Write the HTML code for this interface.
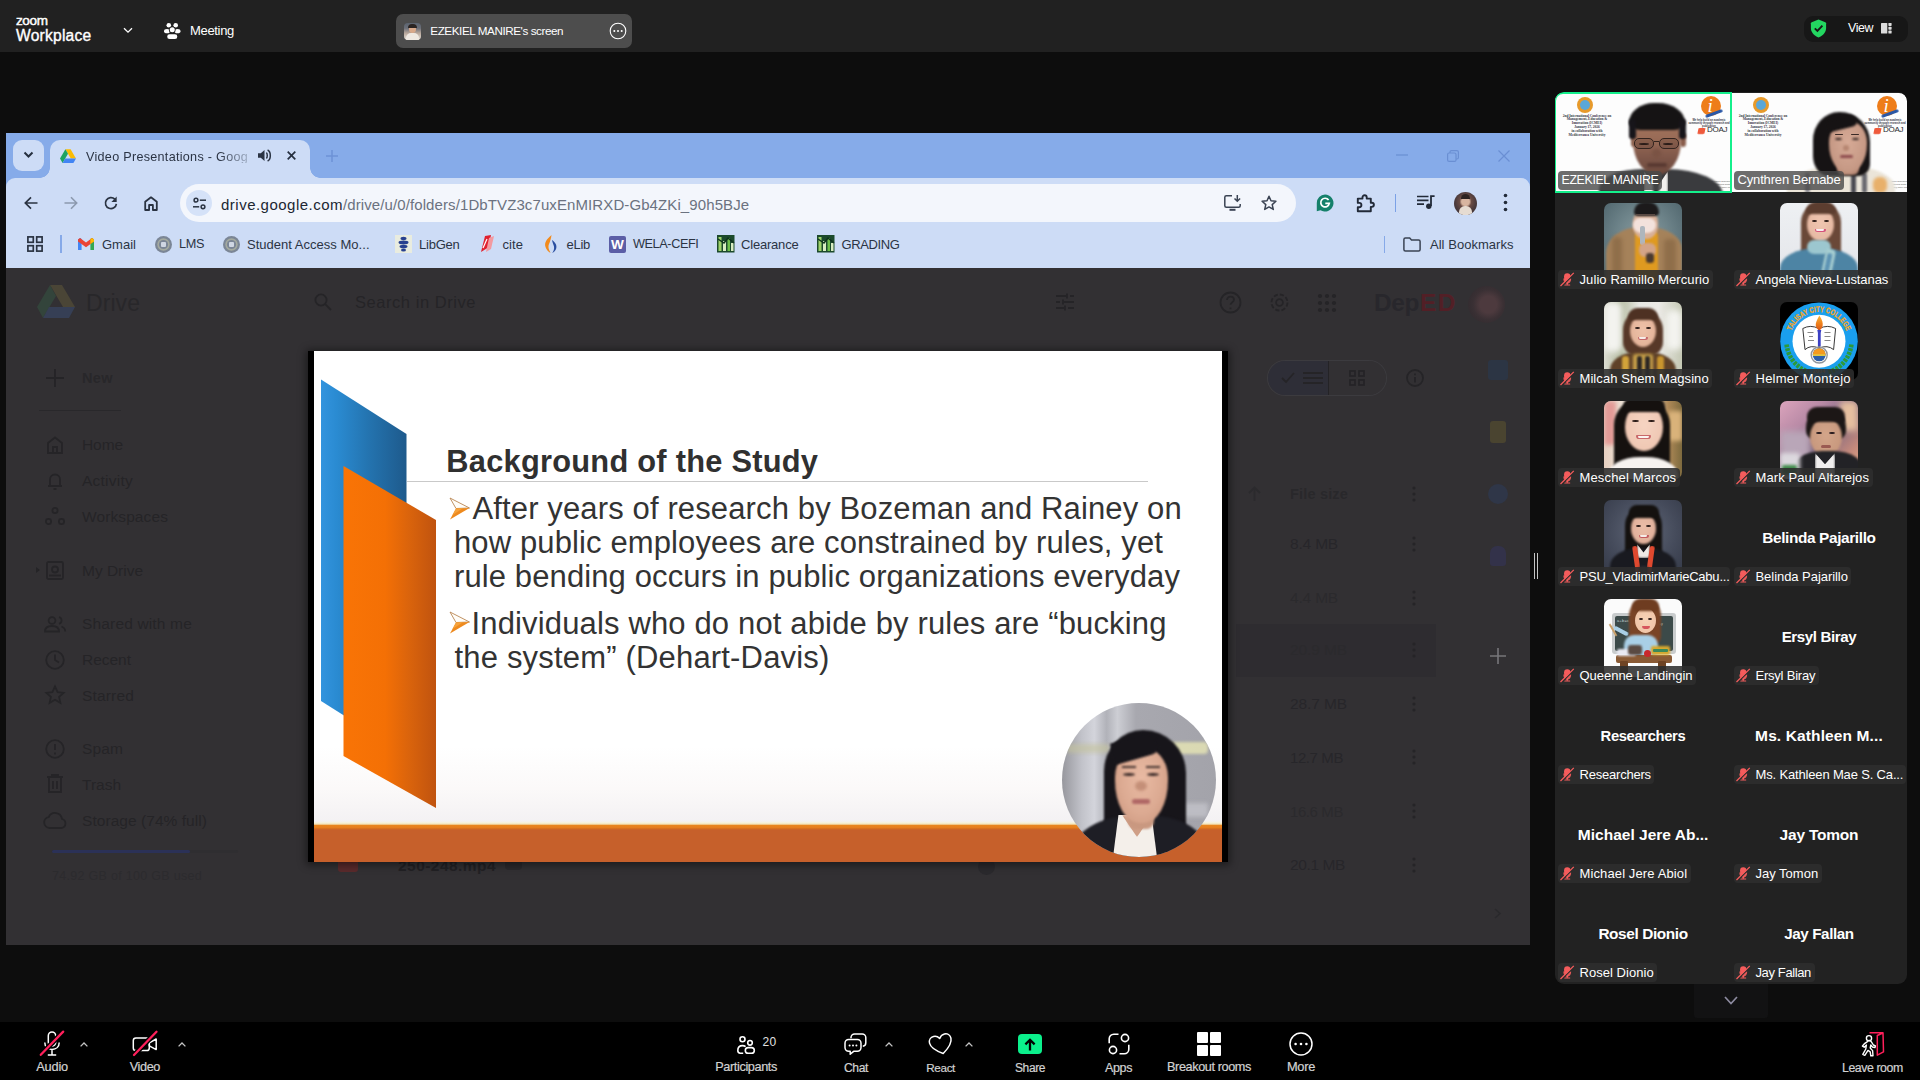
<!DOCTYPE html>
<html lang="en">
<head>
<meta charset="utf-8">
<title>Zoom Workplace - Meeting</title>
<style>
*{box-sizing:border-box;margin:0;padding:0}
html,body{width:1920px;height:1080px;overflow:hidden;background:#0d0d0d}
body{position:relative;font-family:"Liberation Sans","DejaVu Sans",sans-serif;color:#fff}
.a{position:absolute}
.t{position:absolute;white-space:nowrap;line-height:1;color:#fff}
svg{display:block;overflow:visible}
#topbar{position:absolute;left:0;top:0;width:1920px;height:52px;background:#212121}
#pill{position:absolute;left:396px;top:14px;width:236px;height:34px;border-radius:7px;background:#4d4d4d}
#viewpill{position:absolute;left:1804px;top:16px;width:104px;height:26px;border-radius:9px;background:#171717}
#botbar{position:absolute;left:0;top:1022px;width:1920px;height:58px;background:#000}
#share{position:absolute;left:6px;top:133px;width:1524px;height:812px;background:#323033;overflow:hidden}
#chrome{position:absolute;left:0;top:0;width:1524px;height:135px;background:#86abe9}
#cbar{position:absolute;left:0;top:45px;width:1524px;height:90px;background:#cddcf6;border-radius:9px 9px 0 0}
#omni{position:absolute;left:174px;top:51px;width:1116px;height:38px;border-radius:19px;background:#f3f6fc}
#drive{position:absolute;left:0;top:135px;width:1524px;height:677px;background:#323033;overflow:hidden}
#slidewrap{position:absolute;left:302px;top:218px;width:920px;height:511px;background:#000;box-shadow:0 1px 8px 2px rgba(0,0,0,.45)}
#slide{position:absolute;left:6px;top:0;width:908px;height:511px;background:#fff;overflow:hidden}
#panel{position:absolute;left:1555px;top:92px;width:352px;height:892px;background:#222;border-radius:9px;overflow:hidden}
.tile{position:absolute;width:176px;height:99px;overflow:hidden}
.av{position:absolute;left:49px;top:11px;width:78px;height:78px;border-radius:7px;overflow:hidden}
.nm{position:absolute;left:3px;top:78px;height:19px;border-radius:4px;background:rgba(46,46,46,.88);white-space:nowrap;overflow:hidden}
</style>
</head>
<body>
<div id="topbar">
<div class="t" style="left:16.0px;top:13.6px;font-size:13.5px;letter-spacing:-0.38px;-webkit-text-stroke:.45px #fff;">zoom</div>
<div class="t" style="left:16.0px;top:28.1px;font-size:15.6px;letter-spacing:0.23px;-webkit-text-stroke:.35px #fff;">Workplace</div>
<svg class="a" style="left:123px;top:27px;" width="10" height="7" viewBox="0 0 10 7"><path d="M1 1.2 L5 5.2 L9 1.2" fill="none" stroke="#fff" stroke-width="1.3"/></svg>
<svg class="a" style="left:164px;top:23px;" width="17" height="17" viewBox="0 0 17 17"><g fill="#fff"><circle cx="4.800" cy="2.300" r="2.300"/><circle cx="11.700" cy="2.300" r="2.300"/><ellipse cx="3" cy="8.200" rx="3" ry="2.100"/><ellipse cx="13.500" cy="8.200" rx="3" ry="2.100"/><circle cx="8.250" cy="6.800" r="3.400" fill="#212121"/><circle cx="8.250" cy="6.800" r="2.500"/><rect x="3.200" y="11.300" width="10.100" height="4.700" rx="2.350"/></g></svg>
<div class="t" style="left:190.0px;top:24.3px;font-size:13px;letter-spacing:-0.32px;">Meeting</div>
<div id="pill">
<div class="a" style="left:8px;top:9px;width:17px;height:17px;border-radius:4px;overflow:hidden;background:linear-gradient(180deg,#5b6470 0%,#6a6e78 30%,#b9a89c 60%,#e9e4de 100%)"><div class="a" style="left:5px;top:2px;width:7px;height:8px;border-radius:50%;background:#d9a98a"></div><div class="a" style="left:4px;top:1px;width:9px;height:4px;border-radius:4px 4px 0 0;background:#2a2422"></div><div class="a" style="left:2px;top:10px;width:13px;height:8px;border-radius:5px 5px 0 0;background:#efe9e2"></div></div>
<div class="t" style="left:34.3px;top:11.1px;font-size:11.7px;letter-spacing:-0.43px;">EZEKIEL MANIRE's screen</div>
<svg class="a" style="left:213px;top:8px;" width="18" height="18" viewBox="0 0 18 18"><circle cx="9" cy="9" r="7.800" fill="none" stroke="#fff" stroke-width="1.1"/><circle cx="5.300" cy="9" r="1" fill="#fff"/><circle cx="9" cy="9" r="1" fill="#fff"/><circle cx="12.700" cy="9" r="1" fill="#fff"/></svg>
</div>
<div id="viewpill">
<svg class="a" style="left:6px;top:3px;" width="17" height="19" viewBox="0 0 17 19"><path d="M8.5.6 15.300 3.200c.5.200.8.600.8 1.100v4.600c0 4-2.800 7.400-7.600 9.500C3.700 16.300.9 12.900.9 8.900V4.300c0-.5.3-.9.8-1.100z" fill="#23d660"/><path d="M4.800 9.400l2.600 2.500 5-5.200" fill="none" stroke="#171717" stroke-width="1.900"/></svg>
<div class="t" style="left:44.0px;top:5.5px;font-size:12.4px;letter-spacing:-0.41px;">View</div>
<svg class="a" style="left:77px;top:7px;" width="11" height="11" viewBox="0 0 11 11"><g fill="#dcdcdc"><rect x="0" y="0" width="6.300" height="10.500" rx=".6"/><rect x="7.400" y="0" width="3.200" height="2.900" rx=".6"/><rect x="7.400" y="3.800" width="3.200" height="2.900" rx=".6"/><rect x="7.400" y="7.600" width="3.200" height="2.900" rx=".6"/></g></svg>
</div></div>
<div id="share">
<div id="chrome">
<div class="a" style="left:7px;top:7px;width:31px;height:31px;background:#cddcf6;border-radius:9px;"></div>
<svg class="a" style="left:17px;top:18px;" width="11" height="8" viewBox="0 0 11 8"><path d="M1.500 1.500 5.500 5.500 9.500 1.500" fill="none" stroke="#263040" stroke-width="2"/></svg>
<div class="a" style="left:44px;top:7px;width:260px;height:40px;background:#cddcf6;border-radius:10px 10px 0 0;"></div>
<div class="a" style="left:34px;top:35px;width:10px;height:10px;background:radial-gradient(circle at 0 0,rgba(0,0,0,0) 9.5px,#cddcf6 10px)"></div>
<div class="a" style="left:304px;top:35px;width:10px;height:10px;background:radial-gradient(circle at 100% 0,rgba(0,0,0,0) 9.5px,#cddcf6 10px)"></div>
<svg class="a" style="left:54px;top:15.5px;" width="16" height="14.3" viewBox="0 0 16 13.900"><path d="M5.400 0h5.200l5.400 9.300h-5.200z" fill="#fbbc04"/><path d="M5.400 0 0 9.300l2.600 4.600 5.400-9.300z" fill="#1ea362"/><path d="M2.600 13.900 5.200 9.300H16l-2.600 4.600z" fill="#4285f4"/><path d="M10.800 9.300H16l-2.600 4.600z" fill="#ea4335" opacity=".0"/></svg>
<div class="t" style="left:80.0px;top:17.9px;font-size:12.6px;letter-spacing:0.29px;color:#2b3444;-webkit-mask-image:linear-gradient(90deg,#000 82%,rgba(0,0,0,.25) 100%);">Video Presentations - Goog</div>
<svg class="a" style="left:252px;top:16px;" width="14" height="13" viewBox="0 0 14 13"><path d="M0 4.300h2.800L6.500 1v11L2.800 8.700H0z" fill="#2b3444"/><path d="M8.300 3.600c1.300.700 1.300 5.100 0 5.800M9.600 1c3.600 1.500 3.600 9.500 0 11" fill="none" stroke="#2b3444" stroke-width="1.500"/></svg>
<svg class="a" style="left:281px;top:18px;" width="9" height="9" viewBox="0 0 9 9"><path d="M.7.700l7.600 7.600M8.300.700.700 8.300" stroke="#263040" stroke-width="1.700" fill="none"/></svg>
<svg class="a" style="left:320px;top:17px;" width="12" height="12" viewBox="0 0 12 12"><path d="M6 0v12M0 6h12" stroke="#6d92d6" stroke-width="1.500" fill="none"/></svg>
<svg class="a" style="left:1390px;top:21px;" width="12" height="2" viewBox="0 0 12 2"><path d="M0 1h12" stroke="#6a8fd3" stroke-width="1.200"/></svg>
<svg class="a" style="left:1441px;top:16.5px;" width="12" height="12" viewBox="0 0 12 12"><rect x=".6" y="3" width="8.400" height="8.400" rx="1.500" fill="none" stroke="#6a8fd3" stroke-width="1.200"/><path d="M3 3V2.100c0-.8.700-1.500 1.500-1.500h5.400c.8 0 1.500.7 1.500 1.500v5.400c0 .8-.7 1.500-1.500 1.500H9" fill="none" stroke="#6a8fd3" stroke-width="1.200"/></svg>
<svg class="a" style="left:1492px;top:16.5px;" width="12" height="12" viewBox="0 0 12 12"><path d="M.5.500l11 11M11.500.500l-11 11" stroke="#6a8fd3" stroke-width="1.200" fill="none"/></svg>
<div id="cbar"></div>
<div id="omni"></div>
<svg class="a" style="left:18px;top:63px;" width="14" height="14" viewBox="0 0 14 14"><path d="M13.500 7H1.800M7 1.300 1.300 7 7 12.700" fill="none" stroke="#2a3342" stroke-width="1.700"/></svg>
<svg class="a" style="left:58px;top:63px;" width="14" height="14" viewBox="0 0 14 14"><path d="M.5 7h11.700M7 1.300 12.700 7 7 12.700" fill="none" stroke="#8c99ae" stroke-width="1.600"/></svg>
<svg class="a" style="left:98px;top:63px;" width="14" height="14" viewBox="0 0 14 14"><path d="M12.400 7.800A5.500 5.500 0 1 1 10.800 3.200" fill="none" stroke="#2a3342" stroke-width="1.700"/><path d="M12.700 .6v5.300H7.400z" fill="#2a3342"/></svg>
<svg class="a" style="left:138px;top:62.5px;" width="14" height="15" viewBox="0 0 14 15"><path d="M1.200 14V5.700L7 1.300l5.800 4.400V14H8.900V9H5.100v5z" fill="none" stroke="#2a3342" stroke-width="1.800" stroke-linejoin="round"/></svg>
<div class="a" style="left:180px;top:57px;width:26px;height:26px;background:#d5e2f8;border-radius:13px;"></div>
<svg class="a" style="left:186.5px;top:63.5px;" width="13" height="13" viewBox="0 0 13 13"><g fill="none" stroke="#2a3342" stroke-width="1.500"><circle cx="3" cy="3.200" r="1.900"/><path d="M6.800 3.200H13"/><circle cx="10" cy="9.800" r="1.900"/><path d="M0 9.800h6.200"/></g></svg>
<div class="t" style="left:215.0px;top:63.5px;font-size:15px;letter-spacing:0.49px;color:#202632;">drive.google.com</div>
<div class="t" style="left:337.0px;top:63.5px;font-size:15px;letter-spacing:0.10px;color:#6b7280;">/drive/u/0/folders/1DbTVZ3c7uxEnMIRXD-Gb4ZKi_90h5BJe</div>
<svg class="a" style="left:1218px;top:62px;" width="19" height="16" viewBox="0 0 19 16"><g fill="none" stroke="#3a4353" stroke-width="1.500"><path d="M8 .800H2.300C1.500.800.800 1.500.800 2.300v8.400c0 .8.700 1.500 1.500 1.500h12.400c.8 0 1.500-.7 1.500-1.500V9"/><path d="M5.500 14.800h6" stroke-width="2"/><path d="M13.300 0v6M10.500 3.500l2.800 2.800 2.800-2.800"/></g></svg>
<svg class="a" style="left:1255px;top:62px;" width="16" height="16" viewBox="0 0 16 16"><path d="M8 1.300l2 4.500 4.900.5-3.700 3.300 1.100 4.800L8 11.900l-4.300 2.500 1.100-4.800L1.100 6.300 6 5.800z" fill="none" stroke="#3a4353" stroke-width="1.500" stroke-linejoin="round"/></svg>
<svg class="a" style="left:1310px;top:61px;" width="18" height="18" viewBox="0 0 18 18"><path d="M9 .5A8.500 8.500 0 1 1 4.500 16.200L.8 17.300V9A8.500 8.500 0 0 1 9 .5z" fill="#15806a"/><path d="M12.600 6.100A4.300 4.300 0 1 0 13.300 9.400H9.300" fill="none" stroke="#fff" stroke-width="1.700"/></svg>
<svg class="a" style="left:1350px;top:60px;" width="19" height="19" viewBox="0 0 19 19"><path d="M1.800 5.600h4.700V4.300a2.100 2.100 0 0 1 4.200 0v1.300h4.100v4.100h1a2.100 2.100 0 0 1 0 4.200h-1v4.300H1.800v-3.900h1.400a2.200 2.200 0 0 0 0-4.400H1.800z" fill="none" stroke="#222a38" stroke-width="1.900" stroke-linejoin="round"/></svg>
<div class="a" style="left:1388.5px;top:61px;width:1.5px;height:18px;background:#7ba1e6;"></div>
<svg class="a" style="left:1411px;top:62px;" width="18" height="15" viewBox="0 0 18 15"><g fill="none" stroke="#222a38" stroke-width="1.700"><path d="M0 1.500h11.500M0 5.300h11.500M0 9.100h7"/><path d="M14 11V1.200h3.600" stroke-width="1.800"/></g><circle cx="11.800" cy="11.300" r="2.700" fill="#222a38"/></svg>
<div class="a" style="left:1448px;top:58.500px;width:23px;height:23px;border-radius:50%;overflow:hidden;background:radial-gradient(circle at 50% 42%,#d8b5a0 0 22%,#6a4c44 34%,#4a3a3c 60%,#3b3236 100%)"><div class="a" style="left:5px;top:14px;width:13px;height:10px;border-radius:6px 6px 0 0;background:#e6dcd2"></div><div class="a" style="left:7px;top:2px;width:9px;height:5px;border-radius:5px 5px 0 0;background:#2c2220"></div></div>
<svg class="a" style="left:1497px;top:60px;" width="5" height="19" viewBox="0 0 5 19"><circle cx="2.500" cy="2.500" r="1.800" fill="#222a38"/><circle cx="2.500" cy="9.500" r="1.800" fill="#222a38"/><circle cx="2.500" cy="16.500" r="1.800" fill="#222a38"/></svg>
<svg class="a" style="left:21px;top:103px;" width="16" height="16" viewBox="0 0 16 16"><g fill="none" stroke="#2a3342" stroke-width="1.700"><rect x=".9" y=".9" width="5.400" height="5.400"/><rect x="9.700" y=".9" width="5.400" height="5.400"/><rect x=".9" y="9.700" width="5.400" height="5.400"/><rect x="9.700" y="9.700" width="5.400" height="5.400"/></g></svg>
<div class="a" style="left:54px;top:102px;width:1.5px;height:18px;background:#86a9e8;"></div>
<svg class="a" style="left:72px;top:105px;" width="16" height="12" viewBox="0 0 16 12"><path d="M0 12V1.500L2.200 0 3.600 1.100V12z" fill="#4285f4"/><path d="M16 12V1.500L13.800 0l-1.400 1.100V12z" fill="#34a853"/><path d="M0 1.500 2 0l6 4.500L14 0l2 1.500v2L8 9.300 0 3.500z" fill="#ea4335"/><path d="M12.400 1.100 14 0l2 1.500v2l-3.600 2.600z" fill="#fbbc04"/></svg>
<div class="t" style="left:96.0px;top:104.5px;font-size:13px;letter-spacing:0.01px;color:#2b3444;">Gmail</div>
<svg class="a" style="left:148.5px;top:102.5px;" width="17" height="17" viewBox="0 0 17 17"><circle cx="8.500" cy="8.500" r="8.500" fill="#7b8696"/><circle cx="8.500" cy="8.500" r="6.200" fill="#a4aa9f"/><circle cx="8.500" cy="8.500" r="4.600" fill="#7b8696"/><rect x="6" y="6" width="5" height="5" rx="1" fill="#cfd6e2"/></svg>
<div class="t" style="left:173.0px;top:104.7px;font-size:12.7px;letter-spacing:-0.37px;color:#2b3444;">LMS</div>
<svg class="a" style="left:216.5px;top:102.5px;" width="17" height="17" viewBox="0 0 17 17"><circle cx="8.500" cy="8.500" r="8.500" fill="#7b8696"/><circle cx="8.500" cy="8.500" r="6.200" fill="#a4aa9f"/><circle cx="8.500" cy="8.500" r="4.600" fill="#7b8696"/><rect x="6" y="6" width="5" height="5" rx="1" fill="#cfd6e2"/></svg>
<div class="t" style="left:241.0px;top:104.5px;font-size:13px;letter-spacing:0.02px;color:#2b3444;">Student Access Mo...</div>
<div class="a" style="left:388.5px;top:102px;width:17.5px;height:18px;background:#e9ecdf;"></div>
<svg class="a" style="left:392px;top:103px;" width="11" height="16" viewBox="0 0 11 16"><g fill="#27408f"><ellipse cx="5.500" cy="2.500" rx="3" ry="1.700"/><ellipse cx="5.500" cy="6.500" rx="5" ry="1.900"/><ellipse cx="5.500" cy="10.500" rx="4" ry="1.800"/><ellipse cx="5.500" cy="14" rx="2.500" ry="1.500"/></g></svg>
<div class="t" style="left:413.0px;top:104.5px;font-size:13px;letter-spacing:-0.24px;color:#2b3444;">LibGen</div>
<svg class="a" style="left:473px;top:102px;" width="17" height="18" viewBox="0 0 17 18"><path d="M6 1 12 0l-2 12-8 5z" fill="#e0212f"/><path d="M10 3l5-2-3 13-5 3z" fill="#f39aa0"/><path d="M4 13l4-9" stroke="#fff" stroke-width="1.200"/></svg>
<div class="t" style="left:496.5px;top:104.5px;font-size:13px;letter-spacing:0.07px;color:#2b3444;">cite</div>
<svg class="a" style="left:538px;top:102px;" width="13" height="18" viewBox="0 0 13 18"><path d="M7.500 0C3 4 0 7.500 1.500 12c1 3 3 5 5 6-.5-2-2.500-4-2-7 .4-2.600 2-4 3-11z" fill="#f28b1d"/><path d="M8 5c3 2 5.200 5 4.200 8.500-.6 2-2.200 3.500-4 4.500 1.500-2 2.200-4 1.800-6.500C9.700 9.700 8.500 8 8 5z" fill="#2b4fa0"/></svg>
<div class="t" style="left:560.5px;top:104.5px;font-size:13px;letter-spacing:-0.27px;color:#2b3444;">eLib</div>
<div class="a" style="left:602.5px;top:102.5px;width:17.5px;height:17px;background:#5b5ea6;border-radius:2px;"></div>
<div class="t" style="left:605.0px;top:104.5px;font-size:13.6px;letter-spacing:-0.34px;font-weight:bold;">W</div>
<div class="t" style="left:627.0px;top:104.7px;font-size:12.7px;letter-spacing:-0.41px;color:#2b3444;">WELA-CEFI</div>
<svg class="a" style="left:710.5px;top:102px;" width="17.5" height="17.5" viewBox="0 0 17.5 17.5"><rect width="17.500" height="17.500" fill="#1c4a2c"/><rect x="1.500" y="2" width="3" height="14" fill="#9fd36a"/><rect x="6" y="6" width="3" height="10" fill="#d8ecc0"/><rect x="10.500" y="3" width="2.500" height="13" fill="#6fbf4a"/><rect x="14" y="8" width="2.500" height="8" fill="#d8ecc0"/><path d="M1 4l6 4 4-5 6 5" stroke="#10331c" stroke-width="1.500" fill="none"/></svg>
<div class="t" style="left:735.0px;top:104.5px;font-size:13px;letter-spacing:-0.20px;color:#2b3444;">Clearance</div>
<svg class="a" style="left:810.5px;top:102px;" width="17.5" height="17.5" viewBox="0 0 17.5 17.5"><rect width="17.500" height="17.500" fill="#1c4a2c"/><rect x="1.500" y="2" width="3" height="14" fill="#9fd36a"/><rect x="6" y="6" width="3" height="10" fill="#d8ecc0"/><rect x="10.500" y="3" width="2.500" height="13" fill="#6fbf4a"/><rect x="14" y="8" width="2.500" height="8" fill="#d8ecc0"/><path d="M1 4l6 4 4-5 6 5" stroke="#10331c" stroke-width="1.500" fill="none"/></svg>
<div class="t" style="left:835.5px;top:104.5px;font-size:13px;letter-spacing:-0.38px;color:#2b3444;">GRADING</div>
<div class="a" style="left:1377.5px;top:103px;width:1.5px;height:17px;background:#86a9e8;"></div>
<svg class="a" style="left:1397px;top:103.5px;" width="18" height="15" viewBox="0 0 18 15"><path d="M.9 2.400c0-.8.700-1.500 1.500-1.500h4.300l1.800 2h7.100c.8 0 1.500.7 1.500 1.500v8.200c0 .8-.7 1.500-1.500 1.500H2.400c-.8 0-1.500-.7-1.500-1.500z" fill="none" stroke="#3a4353" stroke-width="1.500"/></svg>
<div class="t" style="left:1424.0px;top:104.5px;font-size:13px;letter-spacing:0.03px;color:#2b3444;">All Bookmarks</div>
</div>
<div id="drive">
<svg class="a" style="left:31px;top:17px;" width="38" height="34" viewBox="0 0 38 34"><path d="M13 0h12l13 22H26z" fill="#4a4536"/><path d="M13 0 0 22l6 11 13-22z" fill="#33443b"/><path d="M6 33l6-11h26l-6 11z" fill="#363f55"/></svg>
<div class="t" style="left:80.0px;top:23.5px;font-size:23px;letter-spacing:0.07px;color:#28272a;">Drive</div>
<svg class="a" style="left:308px;top:25px;" width="18" height="18" viewBox="0 0 18 18"><circle cx="7" cy="7" r="5.600" fill="none" stroke="#252427" stroke-width="1.800"/><path d="M11.200 11.200 17 17" fill="none" stroke="#252427" stroke-width="1.800"/></svg>
<div class="t" style="left:349.0px;top:26.0px;font-size:16.5px;letter-spacing:0.55px;color:#252427;">Search in Drive</div>
<svg class="a" style="left:1050px;top:25px;" width="18" height="18" viewBox="0 0 18 18"><path d="M0 3h11M14 3h4M0 9h4M7 9h11M0 15h9M12 15h6M11 .500v5M7 6.500v5M9 12.500v5" fill="none" stroke="#252427" stroke-width="1.800"/></svg>
<svg class="a" style="left:1213px;top:23px;" width="23" height="23" viewBox="0 0 23 23"><circle cx="11.500" cy="11.500" r="10" fill="none" stroke="#252427" stroke-width="1.800"/><path d="M8 9c0-2 1.500-3.400 3.500-3.400S15 7 15 8.800c0 2.200-3.500 2.600-3.500 5M11.500 16.500v1.800" fill="none" stroke="#252427" stroke-width="1.800"/></svg>
<svg class="a" style="left:1262px;top:23px;" width="23" height="23" viewBox="0 0 23 23"><circle cx="11.500" cy="11.500" r="8" fill="none" stroke="#252427" stroke-width="1.800" stroke-width="3" stroke-dasharray="4.200 2.100"/><circle cx="11.500" cy="11.500" r="3.400" fill="none" stroke="#252427" stroke-width="1.800"/></svg>
<svg class="a" style="left:1311px;top:25px;" width="20" height="20" viewBox="0 0 20 20"><circle cx="3" cy="3" r="2.100" fill="#252427"/><circle cx="3" cy="10" r="2.100" fill="#252427"/><circle cx="3" cy="17" r="2.100" fill="#252427"/><circle cx="10" cy="3" r="2.100" fill="#252427"/><circle cx="10" cy="10" r="2.100" fill="#252427"/><circle cx="10" cy="17" r="2.100" fill="#252427"/><circle cx="17" cy="3" r="2.100" fill="#252427"/><circle cx="17" cy="10" r="2.100" fill="#252427"/><circle cx="17" cy="17" r="2.100" fill="#252427"/></svg>
<div class="t" style="left:1368.0px;top:23.3px;font-size:24.4px;letter-spacing:-0.37px;color:#28272c;font-weight:bold;">Dep</div>
<div class="t" style="left:1414.0px;top:23.3px;font-size:24.5px;letter-spacing:1.48px;color:#521f26;font-weight:bold;">ED</div>
<div class="a" style="left:1462px;top:18px;width:37px;height:37px;background:radial-gradient(circle at 55% 50%,#4d3a3e 0 30%,#3a3034 55%,#2b282c 100%);border-radius:50%;"></div>
<svg class="a" style="left:40px;top:101px;" width="18" height="18" viewBox="0 0 18 18"><path d="M9 0v18M0 9h18" fill="none" stroke="#252427" stroke-width="1.800"/></svg>
<div class="t" style="left:76.0px;top:102.7px;font-size:14.5px;letter-spacing:0.40px;color:#28272a;font-weight:bold;">New</div>
<div class="a" style="left:33px;top:142px;width:82px;height:1px;background:#29282b;"></div>
<div class="t" style="left:76.0px;top:169.4px;font-size:15.5px;letter-spacing:-0.09px;color:#252427;">Home</div>
<div class="t" style="left:76.0px;top:205.4px;font-size:15.5px;letter-spacing:0.24px;color:#252427;">Activity</div>
<div class="t" style="left:76.0px;top:241.4px;font-size:15.5px;letter-spacing:0.10px;color:#252427;">Workspaces</div>
<div class="t" style="left:76.0px;top:294.9px;font-size:15.5px;letter-spacing:-0.02px;color:#252427;">My Drive</div>
<div class="t" style="left:76.0px;top:348.4px;font-size:15.5px;letter-spacing:0.16px;color:#252427;">Shared with me</div>
<div class="t" style="left:76.0px;top:383.9px;font-size:15.5px;letter-spacing:-0.02px;color:#252427;">Recent</div>
<div class="t" style="left:76.0px;top:419.9px;font-size:15.5px;letter-spacing:0.17px;color:#252427;">Starred</div>
<div class="t" style="left:76.0px;top:472.9px;font-size:15.5px;letter-spacing:0.13px;color:#252427;">Spam</div>
<div class="t" style="left:76.0px;top:508.9px;font-size:15.5px;letter-spacing:-0.01px;color:#252427;">Trash</div>
<div class="t" style="left:76.0px;top:544.9px;font-size:15.5px;letter-spacing:0.05px;color:#252427;">Storage (74% full)</div>
<svg class="a" style="left:40px;top:168px;" width="18" height="18" viewBox="0 0 18 18"><path d="M2 17V7l7-5.500L16 7v10H2zM7 17v-6h4v6" fill="none" stroke="#252427" stroke-width="1.800"/></svg>
<svg class="a" style="left:41px;top:203px;" width="16" height="19" viewBox="0 0 16 19"><path d="M1 15h14M3 15V8.500a5 5 0 0 1 10 0V15M6.500 18h3" fill="none" stroke="#252427" stroke-width="1.800"/></svg>
<svg class="a" style="left:39px;top:239px;" width="20" height="19" viewBox="0 0 20 19"><circle cx="10" cy="3.500" r="2.600" fill="none" stroke="#252427" stroke-width="1.800"/><circle cx="3.500" cy="14.500" r="2.600" fill="none" stroke="#252427" stroke-width="1.800"/><circle cx="16.500" cy="14.500" r="2.600" fill="none" stroke="#252427" stroke-width="1.800"/></svg>
<svg class="a" style="left:30px;top:299px;" width="4" height="6" viewBox="0 0 4 6"><path d="M0 0l4 3-4 3z" fill="#252427"/></svg>
<svg class="a" style="left:40px;top:293px;" width="18" height="19" viewBox="0 0 18 19"><rect x="1" y="1" width="16" height="17" rx="1.500" fill="none" stroke="#252427" stroke-width="1.800"/><circle cx="9" cy="8.500" r="3" fill="none" stroke="#252427" stroke-width="1.800"/><path d="M3 14.500h12" fill="none" stroke="#252427" stroke-width="1.800"/></svg>
<svg class="a" style="left:38px;top:348px;" width="22" height="16" viewBox="0 0 22 16"><circle cx="8" cy="4.500" r="3.400" fill="none" stroke="#252427" stroke-width="1.800"/><path d="M1 15.500c0-4 3-5.500 7-5.500s7 1.500 7 5.500zM15 1.200a3.400 3.400 0 0 1 0 6.600M17.500 10.500c2.500.800 3.700 2.300 3.700 5" fill="none" stroke="#252427" stroke-width="1.800"/></svg>
<svg class="a" style="left:39px;top:382px;" width="20" height="20" viewBox="0 0 20 20"><circle cx="10" cy="10" r="8.800" fill="none" stroke="#252427" stroke-width="1.800"/><path d="M10 4.500V10l4 2.500" fill="none" stroke="#252427" stroke-width="1.800"/></svg>
<svg class="a" style="left:39px;top:417px;" width="20" height="20" viewBox="0 0 20 20"><path d="M10 1.500l2.600 5.600 6 .700-4.500 4.100 1.300 6L10 14.800l-5.400 3.100 1.300-6L1.400 7.800l6-.700z" fill="none" stroke="#252427" stroke-width="1.800"/></svg>
<svg class="a" style="left:39px;top:471px;" width="20" height="20" viewBox="0 0 20 20"><circle cx="10" cy="10" r="8.800" fill="none" stroke="#252427" stroke-width="1.800"/><path d="M10 5v6M10 13.500v2" fill="none" stroke="#252427" stroke-width="1.800"/></svg>
<svg class="a" style="left:41px;top:506px;" width="16" height="20" viewBox="0 0 16 20"><path d="M0 3h16M5 3V1h6v2M2 3v15h12V3M6 7v8M10 7v8" fill="none" stroke="#252427" stroke-width="1.800"/></svg>
<svg class="a" style="left:37px;top:544px;" width="24" height="17" viewBox="0 0 24 17"><path d="M6.500 16a5.500 5.500 0 0 1-.800-10.900A7 7 0 0 1 19 7a4.600 4.600 0 0 1-.500 9z" fill="none" stroke="#252427" stroke-width="1.800"/></svg>
<div class="a" style="left:46px;top:582px;width:186px;height:3px;background:#2f2e31;border-radius:2px;"></div>
<div class="a" style="left:46px;top:582px;width:138px;height:3px;background:#2b3157;border-radius:2px;"></div>
<div class="t" style="left:46.0px;top:602.4px;font-size:12.5px;letter-spacing:0.30px;color:#2c2b2e;">74.92 GB of 100 GB used</div>
<div class="a" style="left:1262px;top:93px;width:118px;height:34px;background:linear-gradient(90deg,#2e2e37 0 60px,#323033 60px);border-radius:17px;box-shadow:0 0 0 1px #3c3b3f;"></div>
<div class="a" style="left:1322px;top:93px;width:1px;height:34px;background:#242326;"></div>
<svg class="a" style="left:1275px;top:102px;" width="44" height="16" viewBox="0 0 44 16"><path d="M1 8l4 4 8-9M22 3h20M22 8h20M22 13h20" fill="none" stroke="#252427" stroke-width="1.800"/></svg>
<svg class="a" style="left:1343px;top:102px;" width="16" height="16" viewBox="0 0 16 16"><rect x="1" y="1" width="5" height="5" fill="none" stroke="#252427" stroke-width="1.800"/><rect x="10" y="1" width="5" height="5" fill="none" stroke="#252427" stroke-width="1.800"/><rect x="1" y="10" width="5" height="5" fill="none" stroke="#252427" stroke-width="1.800"/><rect x="10" y="10" width="5" height="5" fill="none" stroke="#252427" stroke-width="1.800"/></svg>
<svg class="a" style="left:1400px;top:101px;" width="18" height="18" viewBox="0 0 18 18"><circle cx="9" cy="9" r="8" fill="none" stroke="#252427" stroke-width="1.800"/><path d="M9 8v5.500M9 4.500v1.800" fill="none" stroke="#252427" stroke-width="1.800"/></svg>
<svg class="a" style="left:1242px;top:218px;" width="13" height="15" viewBox="0 0 13 15"><path d="M6.500 15V1.500M1 7l5.500-5.500L12 7" fill="none" stroke="#2b2a2d" stroke-width="1.800"/></svg>
<div class="t" style="left:1284.0px;top:219.2px;font-size:14.5px;letter-spacing:0.18px;color:#29282b;font-weight:bold;">File size</div>
<div class="a" style="left:1230px;top:356px;width:200px;height:53px;background:#2e2c30;"></div>
<svg class="a" style="left:1406px;top:218px;" width="4" height="16" viewBox="0 0 4 16"><circle cx="2" cy="2" r="1.600" fill="#252427"/><circle cx="2" cy="8" r="1.600" fill="#252427"/><circle cx="2" cy="14" r="1.600" fill="#252427"/></svg>
<div class="t" style="left:1284.0px;top:268.4px;font-size:15.5px;letter-spacing:-0.18px;color:#27262a;">8.4 MB</div>
<svg class="a" style="left:1406px;top:268px;" width="4" height="16" viewBox="0 0 4 16"><circle cx="2" cy="2" r="1.600" fill="#252427"/><circle cx="2" cy="8" r="1.600" fill="#252427"/><circle cx="2" cy="14" r="1.600" fill="#252427"/></svg>
<div class="t" style="left:1284.0px;top:322.4px;font-size:15.5px;letter-spacing:-0.18px;color:#2b2a2d;">4.4 MB</div>
<svg class="a" style="left:1406px;top:322px;" width="4" height="16" viewBox="0 0 4 16"><circle cx="2" cy="2" r="1.600" fill="#252427"/><circle cx="2" cy="8" r="1.600" fill="#252427"/><circle cx="2" cy="14" r="1.600" fill="#252427"/></svg>
<div class="t" style="left:1284.0px;top:374.4px;font-size:15.5px;letter-spacing:-0.10px;color:#2b2a2d;">20.9 MB</div>
<svg class="a" style="left:1406px;top:374px;" width="4" height="16" viewBox="0 0 4 16"><circle cx="2" cy="2" r="1.600" fill="#252427"/><circle cx="2" cy="8" r="1.600" fill="#252427"/><circle cx="2" cy="14" r="1.600" fill="#252427"/></svg>
<div class="t" style="left:1284.0px;top:428.4px;font-size:15.5px;letter-spacing:-0.10px;color:#27262a;">28.7 MB</div>
<svg class="a" style="left:1406px;top:428px;" width="4" height="16" viewBox="0 0 4 16"><circle cx="2" cy="2" r="1.600" fill="#252427"/><circle cx="2" cy="8" r="1.600" fill="#252427"/><circle cx="2" cy="14" r="1.600" fill="#252427"/></svg>
<div class="t" style="left:1284.0px;top:481.8px;font-size:15.0px;letter-spacing:-0.41px;color:#27262a;">12.7 MB</div>
<svg class="a" style="left:1406px;top:481px;" width="4" height="16" viewBox="0 0 4 16"><circle cx="2" cy="2" r="1.600" fill="#252427"/><circle cx="2" cy="8" r="1.600" fill="#252427"/><circle cx="2" cy="14" r="1.600" fill="#252427"/></svg>
<div class="t" style="left:1284.0px;top:535.8px;font-size:15.0px;letter-spacing:-0.41px;color:#2b2a2d;">16.6 MB</div>
<svg class="a" style="left:1406px;top:535px;" width="4" height="16" viewBox="0 0 4 16"><circle cx="2" cy="2" r="1.600" fill="#252427"/><circle cx="2" cy="8" r="1.600" fill="#252427"/><circle cx="2" cy="14" r="1.600" fill="#252427"/></svg>
<div class="t" style="left:1284.0px;top:589.4px;font-size:15.5px;letter-spacing:-0.39px;color:#27262a;">20.1 MB</div>
<svg class="a" style="left:1406px;top:589px;" width="4" height="16" viewBox="0 0 4 16"><circle cx="2" cy="2" r="1.600" fill="#252427"/><circle cx="2" cy="8" r="1.600" fill="#252427"/><circle cx="2" cy="14" r="1.600" fill="#252427"/></svg>
<div class="a" style="left:1482px;top:92px;width:20px;height:20px;background:#2c3544;border-radius:3px;"></div>
<div class="a" style="left:1484px;top:153px;width:16px;height:22px;background:#4a4430;border-radius:3px;"></div>
<div class="a" style="left:1482px;top:216px;width:20px;height:20px;background:#2f3648;border-radius:50%;"></div>
<div class="a" style="left:1484px;top:278px;width:16px;height:20px;background:#33324a;border-radius:7px 7px 3px 3px;"></div>
<svg class="a" style="left:1484px;top:380px;" width="16" height="16" viewBox="0 0 16 16"><path d="M8 0v16M0 8h16" fill="none" stroke="#77767a" stroke-width="1.600"/></svg>
<svg class="a" style="left:1488px;top:640px;" width="7" height="11" viewBox="0 0 7 11"><path d="M1 1l5 4.500L1 10" fill="none" stroke="#2a292c" stroke-width="1.600"/></svg>
<div class="a" style="left:332px;top:590px;width:20px;height:14px;background:#5a2a2c;border-radius:3px;"></div>
<div class="t" style="left:392.0px;top:589.9px;font-size:15.5px;letter-spacing:0.45px;color:#222124;font-weight:bold;">250-248.mp4</div>
<div class="a" style="left:972px;top:590px;width:17px;height:17px;background:#2a292d;border-radius:50%;"></div>
<div class="a" style="left:499px;top:592px;width:17px;height:10px;background:#2a292c;border-radius:4px;"></div>
</div>
<div id="slidewrap"><div id="slide">
<div class="a" style="left:0px;top:395px;width:908px;height:78px;background:linear-gradient(180deg,#fff 0%,#fbf9f9 55%,#f3f1f3 100%);"></div>
<div class="a" style="left:0px;top:473px;width:908px;height:38px;background:#c6602b;"></div>
<div class="a" style="left:0px;top:469.5px;width:908px;height:9px;background:linear-gradient(180deg,rgba(246,243,228,0) 0,#f6f2dc 18%,#f3e2b6 36%,#e8861f 46%,#e67e1e 72%,#d56d1f 86%,#c6602b 100%);"></div>
<svg class="a" style="left:0;top:0" width="908" height="511" viewBox="0 0 908 511"><defs><linearGradient id="gb" x1="0" x2="1" y1="0" y2="0"><stop offset="0" stop-color="#3394de"/><stop offset=".18" stop-color="#2a8bd2"/><stop offset=".55" stop-color="#2474b0"/><stop offset="1" stop-color="#1e5a8c"/></linearGradient><linearGradient id="go" x1="0" x2="1" y1="0" y2="0"><stop offset="0" stop-color="#f97406"/><stop offset=".45" stop-color="#f47005"/><stop offset=".72" stop-color="#d9630c"/><stop offset="1" stop-color="#c0530f"/></linearGradient></defs><path d="M7 28.500 92.500 83V404L7 350z" fill="url(#gb)"/><path d="M29.500 115 122 169V457L29.500 405z" fill="url(#go)"/></svg>
<div class="t" style="left:132.3px;top:95.5px;font-size:30.8px;letter-spacing:0.25px;color:#303030;font-weight:bold;">Background of the Study</div>
<div class="a" style="left:93px;top:129.5px;width:741px;height:1.5px;background:#c9c9c9;"></div>
<svg class="a" style="left:135.7px;top:146.8px;" width="20" height="22" viewBox="0 0 20 22"><path d="M0 0 19.500 10 6 10.500z" fill="#fffdf8" stroke="#b98652" stroke-width=".9" stroke-linejoin="round"/><path d="M6 10.500 19.500 10 0 21.500z" fill="#ee8a1e"/><path d="M6 10.500 13 10.300 2.500 17z" fill="#f6a23a"/></svg>
<svg class="a" style="left:136px;top:261px;" width="20" height="22" viewBox="0 0 20 22"><path d="M0 0 19.500 10 6 10.500z" fill="#fffdf8" stroke="#b98652" stroke-width=".9" stroke-linejoin="round"/><path d="M6 10.500 19.500 10 0 21.500z" fill="#ee8a1e"/><path d="M6 10.500 13 10.300 2.500 17z" fill="#f6a23a"/></svg>
<div class="t" style="left:158.5px;top:142.2px;font-size:31px;letter-spacing:0.13px;color:#333;">After years of research by Bozeman and Rainey on</div>
<div class="t" style="left:140.0px;top:176.0px;font-size:31px;letter-spacing:0.12px;color:#333;">how public employees are constrained by rules, yet</div>
<div class="t" style="left:140.0px;top:209.8px;font-size:31px;letter-spacing:0.11px;color:#333;">rule bending occurs in public organizations everyday</div>
<div class="t" style="left:157.5px;top:256.8px;font-size:31px;letter-spacing:0.15px;color:#333;">Individuals who do not abide by rules are “bucking</div>
<div class="t" style="left:140.5px;top:291.0px;font-size:31px;letter-spacing:0.18px;color:#333;">the system” (Dehart-Davis)</div>
<div class="a" style="left:748px;top:352px;width:154px;height:154px;border-radius:50%;overflow:hidden;background:linear-gradient(90deg,#97979d 0%,#c2c3ca 13%,#d3d4db 21%,#b1b2b9 29%,#cdced4 36%,#a8a8af 48%,#a3a3aa 100%)"><div class="a" style="left:4px;top:41px;width:44px;height:9px;background:#c4c29a;opacity:.6;border-radius:4px;filter:blur(2px)"></div><div class="a" style="left:106px;top:39px;width:40px;height:12px;background:#e4e3b4;opacity:.85;border-radius:4px;filter:blur(1.500px)"></div><div class="a" style="left:96px;top:100px;width:50px;height:14px;background:#c8c8cf;opacity:.7;filter:blur(2px)"></div><div class="a" style="left:42px;top:27px;width:82px;height:120px;border-radius:42px 46px 26px 30px / 44px 46px 30px 30px;background:#17151a;filter:blur(1.200px)"></div><div class="a" style="left:10px;top:112px;width:134px;height:60px;border-radius:64px 60px 0 0 / 38px 34px 0 0;background:#1e1e25;filter:blur(1px)"></div><div class="a" style="left:50px;top:112px;width:46px;height:50px;background:#f4efea;clip-path:polygon(14% 0,86% 0,100% 100%,0 100%);filter:blur(.6px)"></div><div class="a" style="left:60px;top:112px;width:30px;height:22px;background:#cf9f87;clip-path:polygon(0 0,100% 0,50% 100%);filter:blur(.8px)"></div><div class="a" style="left:66px;top:100px;width:26px;height:26px;background:#c99880;border-radius:8px;filter:blur(1.200px)"></div><div class="a" style="left:53px;top:44px;width:53px;height:76px;border-radius:26px 26px 24px 24px / 30px 30px 42px 42px;background:radial-gradient(ellipse at 50% 42%,#e9baa3 0,#dcaa92 55%,#c8937a 100%);filter:blur(.8px)"></div><div class="a" style="left:50px;top:34px;width:46px;height:22px;border-radius:0 22px 14px 0;background:#17151a;transform:rotate(-16deg);filter:blur(1.200px)"></div><div class="a" style="left:61px;top:70px;width:12px;height:3px;border-radius:50%;background:#3a2a28;filter:blur(.8px)"></div><div class="a" style="left:85px;top:70px;width:12px;height:3px;border-radius:50%;background:#3a2a28;filter:blur(.8px)"></div><div class="a" style="left:60px;top:63px;width:14px;height:2px;background:#4a3834;filter:blur(.8px)"></div><div class="a" style="left:84px;top:63px;width:14px;height:2px;background:#4a3834;filter:blur(.8px)"></div><div class="a" style="left:73px;top:78px;width:12px;height:10px;border-radius:50%;background:#c48f78;filter:blur(1.500px)"></div><div class="a" style="left:70px;top:96px;width:18px;height:5px;border-radius:3px;background:#a4565a;opacity:.8;filter:blur(1px)"></div></div>
</div></div>
</div>
<div id="panel">
<div class="tile" style="left:0;top:1px;border-radius:8px 0 0 0"><div class="a" style="left:0px;top:0px;width:176px;height:99px;background:#fdfdfd;border-radius:0;"></div><div class="a" style="left:22px;top:4px;width:16px;height:16px;background:#e79a2b;border-radius:50%;filter:blur(0.5px);"></div><div class="a" style="left:25px;top:7px;width:10px;height:10px;background:#5aa7d8;border-radius:50%;filter:blur(0.4px);"></div><div class="t" style="left:0;width:64px;text-align:center;top:21.6px;font-size:3.600px;font-weight:bold;font-family:'Liberation Serif',serif;color:#3a3a4a;letter-spacing:-.05px">2nd International Conference on</div><div class="t" style="left:0;width:64px;text-align:center;top:25.4px;font-size:3.600px;font-weight:bold;font-family:'Liberation Serif',serif;color:#3a3a4a;letter-spacing:-.05px">Management, Education &amp;</div><div class="t" style="left:0;width:64px;text-align:center;top:29.2px;font-size:3.600px;font-weight:bold;font-family:'Liberation Serif',serif;color:#3a3a4a;letter-spacing:-.05px">Innovation (ICMEI)</div><div class="t" style="left:0;width:64px;text-align:center;top:33.4px;font-size:3.600px;font-weight:bold;font-family:'Liberation Serif',serif;color:#3a3a4a;letter-spacing:-.05px">January 17, 2026</div><div class="t" style="left:0;width:64px;text-align:center;top:37.0px;font-size:3.600px;font-weight:bold;font-family:'Liberation Serif',serif;color:#3a3a4a;letter-spacing:-.05px">in collaboration with</div><div class="t" style="left:0;width:64px;text-align:center;top:40.9px;font-size:3.600px;font-weight:bold;font-family:'Liberation Serif',serif;color:#3a3a4a;letter-spacing:-.05px">Mediterranea University</div><div class="a" style="left:146px;top:3px;width:20px;height:20px;background:#ee7d1a;border-radius:50%;filter:blur(0.5px);"></div><div class="t" style="left:152.500px;top:3px;font-size:19px;font-style:italic;font-family:'Liberation Serif',serif;color:#fff">i</div><div class="a" style="left:150px;top:19px;width:18px;height:3px;background:#2a57a6;border-radius:2px;filter:blur(0.5px);transform:rotate(-20deg);"></div><div class="t" style="left:132px;width:44px;text-align:center;top:26px;font-size:2.600px;line-height:3.200px;font-weight:bold;color:#3a3a4a;white-space:normal">We help build an academic community through research and publication</div><div class="a" style="left:143px;top:34.5px;width:7px;height:5.5px;background:#ef5a3c;border-radius:1px;filter:blur(0.3px);transform:skewX(-12deg);"></div><div class="t" style="left:152px;top:33.200px;font-size:8px;letter-spacing:-.3px;color:#2a2a2e">DOAJ</div><div class="t" style="left:139px;width:37px;text-align:right;top:87px;font-size:2.300px;line-height:3px;color:#555;white-space:normal">Mediterranea Research Incorporated Camarines Norte, Philippines Email: official@icmei.org</div><div class="a" style="left:44px;top:76px;width:124px;height:30px;background:#3a3b3e;border-radius:44px 56px 0 0 / 20px 26px 0 0;filter:blur(1.2px);"></div><div class="a" style="left:89px;top:78px;width:24px;height:24px;background:#f2f0ee;border-radius:3px;filter:blur(0.8px);clip-path:polygon(0 0,50% 75%,100% 0,100% 100%,0 100%);"></div><div class="a" style="left:98px;top:86px;width:6px;height:14px;background:#2c2c30;border-radius:2px;filter:blur(0.8px);"></div><div class="a" style="left:76px;top:40px;width:6px;height:14px;background:#8a5e4c;border-radius:3px;filter:blur(1px);"></div><div class="a" style="left:125px;top:40px;width:6px;height:14px;background:#8a5e4c;border-radius:3px;filter:blur(1px);"></div><div class="a" style="left:78px;top:20px;width:48px;height:62px;background:linear-gradient(180deg,#a5765f 0%,#9a6c57 40%,#80584a 70%,#6b483c 100%);border-radius:22px 22px 24px 24px / 22px 22px 34px 34px;filter:blur(1px);"></div><div class="a" style="left:74px;top:10px;width:56px;height:27px;background:#151314;border-radius:26px 28px 12px 12px / 20px 20px 8px 8px;filter:blur(1.1px);"></div><div class="a" style="left:74px;top:26px;width:7px;height:20px;background:#17151a;border-radius:3px;filter:blur(1.2px);"></div><div class="a" style="left:124px;top:26px;width:7px;height:20px;background:#17151a;border-radius:3px;filter:blur(1.2px);"></div><div class="a" style="left:79px;top:45px;width:20px;height:11px;background:rgba(60,40,34,.18);border-radius:5px;border:1px solid #33241f;"></div><div class="a" style="left:104px;top:45px;width:20px;height:11px;background:rgba(60,40,34,.18);border-radius:5px;border:1px solid #33241f;"></div><div class="a" style="left:99px;top:48px;width:5px;height:1.2px;background:#33241f;border-radius:0;"></div><div class="a" style="left:84px;top:50px;width:10px;height:2px;background:#2a1c18;border-radius:50%;filter:blur(0.7px);"></div><div class="a" style="left:108px;top:50px;width:10px;height:2px;background:#2a1c18;border-radius:50%;filter:blur(0.7px);"></div><div class="a" style="left:97px;top:56px;width:9px;height:9px;background:#7a5344;border-radius:50%;filter:blur(1.5px);"></div><div class="a" style="left:92px;top:70px;width:20px;height:4px;background:#5a3a32;border-radius:3px;filter:blur(1.2px);"></div><div class="nm" style="left:3px;top:77.500px;width:104px;background:rgba(72,72,72,.8)"><div class="t" style="left:3.5px;top:3.1px;font-size:12.4px;letter-spacing:-0.37px;">EZEKIEL MANIRE</div></div></div>
<div class="tile" style="left:176px;top:1px;border-radius:0 8px 0 0"><div class="a" style="left:0px;top:0px;width:176px;height:99px;background:#fdfdfd;border-radius:0;"></div><div class="a" style="left:22px;top:4px;width:16px;height:16px;background:#e79a2b;border-radius:50%;filter:blur(0.5px);"></div><div class="a" style="left:25px;top:7px;width:10px;height:10px;background:#5aa7d8;border-radius:50%;filter:blur(0.4px);"></div><div class="t" style="left:0;width:64px;text-align:center;top:21.6px;font-size:3.600px;font-weight:bold;font-family:'Liberation Serif',serif;color:#3a3a4a;letter-spacing:-.05px">2nd International Conference on</div><div class="t" style="left:0;width:64px;text-align:center;top:25.4px;font-size:3.600px;font-weight:bold;font-family:'Liberation Serif',serif;color:#3a3a4a;letter-spacing:-.05px">Management, Education &amp;</div><div class="t" style="left:0;width:64px;text-align:center;top:29.2px;font-size:3.600px;font-weight:bold;font-family:'Liberation Serif',serif;color:#3a3a4a;letter-spacing:-.05px">Innovation (ICMEI)</div><div class="t" style="left:0;width:64px;text-align:center;top:33.4px;font-size:3.600px;font-weight:bold;font-family:'Liberation Serif',serif;color:#3a3a4a;letter-spacing:-.05px">January 17, 2026</div><div class="t" style="left:0;width:64px;text-align:center;top:37.0px;font-size:3.600px;font-weight:bold;font-family:'Liberation Serif',serif;color:#3a3a4a;letter-spacing:-.05px">in collaboration with</div><div class="t" style="left:0;width:64px;text-align:center;top:40.9px;font-size:3.600px;font-weight:bold;font-family:'Liberation Serif',serif;color:#3a3a4a;letter-spacing:-.05px">Mediterranea University</div><div class="a" style="left:146px;top:3px;width:20px;height:20px;background:#ee7d1a;border-radius:50%;filter:blur(0.5px);"></div><div class="t" style="left:152.500px;top:3px;font-size:19px;font-style:italic;font-family:'Liberation Serif',serif;color:#fff">i</div><div class="a" style="left:150px;top:19px;width:18px;height:3px;background:#2a57a6;border-radius:2px;filter:blur(0.5px);transform:rotate(-20deg);"></div><div class="t" style="left:132px;width:44px;text-align:center;top:26px;font-size:2.600px;line-height:3.200px;font-weight:bold;color:#3a3a4a;white-space:normal">We help build an academic community through research and publication</div><div class="a" style="left:143px;top:34.5px;width:7px;height:5.5px;background:#ef5a3c;border-radius:1px;filter:blur(0.3px);transform:skewX(-12deg);"></div><div class="t" style="left:152px;top:33.200px;font-size:8px;letter-spacing:-.3px;color:#2a2a2e">DOAJ</div><div class="t" style="left:139px;width:37px;text-align:right;top:87px;font-size:2.300px;line-height:3px;color:#555;white-space:normal">Mediterranea Research Incorporated Camarines Norte, Philippines Email: official@icmei.org</div><div class="a" style="left:56px;top:73px;width:108px;height:30px;background:#ebe5d9;border-radius:50px 46px 0 0 / 24px 22px 0 0;filter:blur(1.2px);"></div><div class="a" style="left:74px;top:80px;width:5px;height:20px;background:#8a8a90;border-radius:2px;filter:blur(1.2px);"></div><div class="a" style="left:120px;top:77px;width:5px;height:24px;background:#4a4a52;border-radius:2px;filter:blur(1px);"></div><div class="a" style="left:131px;top:80px;width:5px;height:20px;background:#6a6a70;border-radius:2px;filter:blur(1px);"></div><div class="a" style="left:142px;top:84px;width:14px;height:16px;background:#e8b06a;border-radius:6px;filter:blur(1.5px);"></div><div class="a" style="left:82px;top:19px;width:57px;height:64px;background:#161314;border-radius:26px 30px 12px 16px / 28px 30px 12px 20px;filter:blur(1.3px);"></div><div class="a" style="left:106px;top:66px;width:22px;height:16px;background:#b88a76;border-radius:6px;filter:blur(1.2px);"></div><div class="a" style="left:98px;top:28px;width:38px;height:52px;background:radial-gradient(ellipse at 50% 42%,#d6aa96 0,#c99c88 55%,#b98b77 100%);border-radius:19px 19px 20px 20px / 22px 22px 30px 30px;filter:blur(1px);"></div><div class="a" style="left:96px;top:24px;width:30px;height:12px;background:#161314;border-radius:0 14px 10px 0;filter:blur(1.2px);transform:rotate(-14deg);"></div><div class="a" style="left:104px;top:45px;width:7px;height:2.2px;background:#2c1e1c;border-radius:50%;filter:blur(0.8px);"></div><div class="a" style="left:121px;top:45px;width:7px;height:2.2px;background:#2c1e1c;border-radius:50%;filter:blur(0.8px);"></div><div class="a" style="left:104px;top:41px;width:8px;height:1.3px;background:#3a2a26;border-radius:1px;filter:blur(0.6px);"></div><div class="a" style="left:120px;top:41px;width:8px;height:1.3px;background:#3a2a26;border-radius:1px;filter:blur(0.6px);"></div><div class="a" style="left:112px;top:52px;width:6px;height:6px;background:#b78772;border-radius:50%;filter:blur(1.2px);"></div><div class="a" style="left:109px;top:62px;width:13px;height:3px;background:#8e4c4e;border-radius:3px;filter:blur(0.8px);"></div><div class="nm" style="left:3px;top:77.500px;width:110px;background:rgba(72,72,72,.8)"><div class="t" style="left:3.5px;top:2.6px;font-size:13px;letter-spacing:-0.16px;">Cynthren Bernabe</div></div></div>
<div class="a" style="left:-1px;top:0;width:178px;height:101px;border:2px solid #14ef8b;border-radius:9px 0 0 0"></div>
<div class="tile" style="left:0px;top:100px"><div class="av" style="background:radial-gradient(ellipse at 50% 45%,#8c9ea2 0%,#6f858b 45%,#4c626a 100%)"><div class="a" style="left:2px;top:24px;width:76px;height:62px;background:#a5825a;border-radius:34px 34px 6px 6px / 26px 22px 6px 6px;filter:blur(1.3px);"></div><div class="a" style="left:8px;top:34px;width:10px;height:44px;background:#8f6e4a;border-radius:4px;filter:blur(2px);"></div><div class="a" style="left:60px;top:36px;width:12px;height:40px;background:#8f6e4a;border-radius:4px;filter:blur(2px);"></div><div class="a" style="left:31px;top:28px;width:23px;height:52px;background:#df9a20;border-radius:5px;filter:blur(1px);"></div><div class="a" style="left:29px;top:6px;width:25px;height:30px;background:#d8b098;border-radius:46%;filter:blur(0.9px);"></div><div class="a" style="left:29px;top:15px;width:23px;height:15px;background:#f3e2dc;border-radius:9px 9px 11px 11px;filter:blur(0.8px);"></div><div class="a" style="left:30px;top:-1px;width:25px;height:14px;background:#1c1a1b;border-radius:12px 12px 5px 5px;filter:blur(0.9px);"></div><div class="a" style="left:32px;top:11px;width:19px;height:1.2px;background:#5a4a44;border-radius:0;filter:blur(0.4px);"></div><div class="a" style="left:36px;top:23px;width:4.5px;height:19px;background:#aeb6bd;border-radius:2px;filter:blur(0.6px);"></div><div class="a" style="left:35px;top:40px;width:17px;height:14px;background:#d3a487;border-radius:6px;filter:blur(1px);"></div><div class="a" style="left:42px;top:50px;width:8px;height:10px;background:#4a3a30;border-radius:3px;filter:blur(1.2px);"></div></div><div class="nm" style="width:154.8px"><svg class="a" style="left:0;top:0" width="19" height="19" viewBox="0 0 19 19"><g fill="#f55c5c"><rect x="6.100" y="3.200" width="6.300" height="8" rx="3.100"/><path d="M5.300 8.500h7.900c0 3-1.500 5-3.950 5.200S5.300 11.500 5.300 8.500z" opacity=".92"/><rect x="8.500" y="12.500" width="1.500" height="2.200"/><rect x="6.300" y="14.400" width="5.900" height="1.200" rx=".4"/></g><path d="M3.600 16.300 16.700 3.500" stroke="#2a2a2a" stroke-width="1.500"/><path d="M2.500 16 15.800 2.900" stroke="#f55c5c" stroke-width="1.300"/></svg><div class="t" style="left:21.5px;top:2.9px;font-size:13px;letter-spacing:0.09px;">Julio Ramillo Mercurio</div></div></div>
<div class="tile" style="left:176px;top:100px"><div class="av" style="background:linear-gradient(180deg,#eef0f3 0%,#e3e5e9 100%)"><div class="a" style="left:21px;top:0px;width:40px;height:62px;background:#6a4838;border-radius:19px 19px 10px 10px;filter:blur(1.2px);"></div><div class="a" style="left:27px;top:5px;width:27px;height:33px;background:radial-gradient(ellipse at 50% 45%,#efc6b1 0,#e2b39d 100%);border-radius:50%;filter:blur(0.8px);"></div><div class="a" style="left:26px;top:-1px;width:30px;height:12px;background:#5c3d2f;border-radius:14px 14px 4px 4px;filter:blur(1px);"></div><div class="a" style="left:32px;top:17px;width:5px;height:2px;background:#2a1a16;border-radius:50%;filter:blur(0.6px);"></div><div class="a" style="left:44px;top:17px;width:5px;height:2px;background:#2a1a16;border-radius:50%;filter:blur(0.6px);"></div><div class="a" style="left:34.5px;top:26px;width:11px;height:3.2px;background:#d5527c;border-radius:1px 1px 5px 5px;filter:blur(0.7px);"></div><div class="a" style="left:36px;top:26.3px;width:8px;height:1.5px;background:#f8eef0;border-radius:1px 1px 3px 3px;filter:blur(0.5px);"></div><div class="a" style="left:0px;top:45px;width:78px;height:40px;background:#4d84a4;border-radius:38px 38px 0 0 / 20px 20px 0 0;filter:blur(1px);"></div><div class="a" style="left:27px;top:37px;width:24px;height:14px;background:#9cc7cf;border-radius:7px;filter:blur(1px);"></div><div class="a" style="left:43px;top:46px;width:10px;height:32px;background:#a9d0d2;border-radius:4px;filter:blur(1px);transform:rotate(12deg);"></div><div class="a" style="left:45px;top:50px;width:5px;height:26px;background:#5d93b4;border-radius:2px;filter:blur(1px);transform:rotate(12deg);"></div></div><div class="nm" style="width:157.7px"><svg class="a" style="left:0;top:0" width="19" height="19" viewBox="0 0 19 19"><g fill="#f55c5c"><rect x="6.100" y="3.200" width="6.300" height="8" rx="3.100"/><path d="M5.300 8.500h7.900c0 3-1.500 5-3.950 5.200S5.300 11.500 5.300 8.500z" opacity=".92"/><rect x="8.500" y="12.500" width="1.500" height="2.200"/><rect x="6.300" y="14.400" width="5.900" height="1.200" rx=".4"/></g><path d="M3.600 16.300 16.700 3.500" stroke="#2a2a2a" stroke-width="1.500"/><path d="M2.500 16 15.800 2.900" stroke="#f55c5c" stroke-width="1.300"/></svg><div class="t" style="left:21.5px;top:2.9px;font-size:13px;letter-spacing:-0.08px;">Angela Nieva-Lustanas</div></div></div>
<div class="tile" style="left:0px;top:199px"><div class="av" style="background:linear-gradient(90deg,#dcddd2 0%,#b4bba0 22%,#e8e8e4 45%,#eceae6 70%,#c4c8b4 100%)"><div class="a" style="left:0px;top:0px;width:18px;height:50px;background:#f3f3ef;border-radius:6px;filter:blur(3px);"></div><div class="a" style="left:62px;top:8px;width:16px;height:40px;background:#f3f3ef;border-radius:6px;filter:blur(3px);"></div><div class="a" style="left:19px;top:8px;width:40px;height:46px;background:#573828;border-radius:20px 20px 14px 14px;filter:blur(1.2px);"></div><div class="a" style="left:26px;top:13px;width:26px;height:32px;background:radial-gradient(ellipse at 50% 45%,#eec1a8 0,#dfae94 100%);border-radius:50%;filter:blur(0.8px);"></div><div class="a" style="left:24px;top:6px;width:30px;height:12px;background:#4e3123;border-radius:14px 14px 4px 4px;filter:blur(1px);"></div><div class="a" style="left:31px;top:25px;width:5px;height:2px;background:#2a1a16;border-radius:50%;filter:blur(0.6px);"></div><div class="a" style="left:42px;top:25px;width:5px;height:2px;background:#2a1a16;border-radius:50%;filter:blur(0.6px);"></div><div class="a" style="left:33.5px;top:35px;width:10px;height:2.8px;background:#c4686a;border-radius:1px 1px 5px 5px;filter:blur(0.7px);"></div><div class="a" style="left:35px;top:35.3px;width:7px;height:1.3px;background:#f6ece8;border-radius:1px 1px 3px 3px;filter:blur(0.5px);"></div><div class="a" style="left:6px;top:50px;width:66px;height:36px;background:#5f4128;border-radius:28px 28px 0 0 / 18px 18px 0 0;filter:blur(1.2px);"></div><div class="a" style="left:18px;top:54px;width:7px;height:30px;background:#d2a33a;border-radius:3px;filter:blur(1px);"></div><div class="a" style="left:29px;top:52px;width:20px;height:30px;background:#caa24a;border-radius:3px;filter:blur(1.5px);"></div><div class="a" style="left:33px;top:54px;width:5px;height:28px;background:#2b2624;border-radius:2px;filter:blur(1px);"></div><div class="a" style="left:41px;top:54px;width:5px;height:28px;background:#2b2624;border-radius:2px;filter:blur(1px);"></div><div class="a" style="left:53px;top:54px;width:7px;height:30px;background:#c9952e;border-radius:3px;filter:blur(1px);"></div></div><div class="nm" style="width:154.3px"><svg class="a" style="left:0;top:0" width="19" height="19" viewBox="0 0 19 19"><g fill="#f55c5c"><rect x="6.100" y="3.200" width="6.300" height="8" rx="3.100"/><path d="M5.300 8.500h7.900c0 3-1.500 5-3.950 5.200S5.300 11.500 5.300 8.500z" opacity=".92"/><rect x="8.500" y="12.500" width="1.500" height="2.200"/><rect x="6.300" y="14.400" width="5.900" height="1.200" rx=".4"/></g><path d="M3.600 16.300 16.700 3.500" stroke="#2a2a2a" stroke-width="1.500"/><path d="M2.500 16 15.800 2.900" stroke="#f55c5c" stroke-width="1.300"/></svg><div class="t" style="left:21.5px;top:2.9px;font-size:13px;letter-spacing:0.07px;">Milcah Shem Magsino</div></div></div>
<div class="tile" style="left:176px;top:199px"><div class="av" style="background:#000"><svg class="a" style="left:0;top:0" width="78" height="78" viewBox="0 0 78 78"><defs><path id="tcarc" d="M9.800 39.200A29.200 29.200 0 0 1 68.200 39.200"/><linearGradient id="tcfl" x1="0" x2="0" y1="0" y2="1"><stop offset="0" stop-color="#f7b53a"/><stop offset=".6" stop-color="#ee7d1a"/><stop offset="1" stop-color="#d9581a"/></linearGradient></defs><circle cx="39" cy="39.200" r="38.800" fill="#1a9fee"/><circle cx="39" cy="39.200" r="26.500" fill="#fff"/><text font-family="Liberation Sans,sans-serif" font-size="8" font-weight="bold" fill="#f5a623" stroke="#f5a623" stroke-width=".25"><textPath href="#tcarc" startOffset="50%" text-anchor="middle" textLength="71" lengthAdjust="spacingAndGlyphs">TALISAY CITY COLLEGE</textPath></text><path d="M6.600 42.500A32.500 32.500 0 0 0 30 70.400" fill="none" stroke="#2c9a3a" stroke-width="4.600" stroke-dasharray="2.800 1.100"/><path d="M71.400 42.500A32.500 32.500 0 0 1 48 70.400" fill="none" stroke="#2c9a3a" stroke-width="4.600" stroke-dasharray="2.800 1.100"/><path d="M22.800 26.500Q30.500 22.300 38.800 26.500V46Q30.500 42.600 25 47.600z" fill="#fff" stroke="#222" stroke-width=".9" stroke-linejoin="round"/><path d="M55.600 26.500Q47.500 22.300 39.400 26.500V46Q47.500 42.600 53.600 47.600z" fill="#fff" stroke="#222" stroke-width=".9" stroke-linejoin="round"/><g stroke="#555" stroke-width=".7"><path d="M27.500 30.500h6M29 34.500h4M28 38.500h6M44.500 30.500h6M44.500 34.500h6M44.500 38.500h6"/></g><path d="M37.300 28h4l-.6 3v13.500h-2.800V31z" fill="#3b3fc4"/><path d="M39.300 13.500c3 4.500 3.900 7.500 3.300 10.500-.5 2.400-1.800 3.800-3.300 4-1.700-.3-3-1.700-3.400-4-.5-3 .9-5.500 3.400-10.500z" fill="url(#tcfl)"/><circle cx="39.200" cy="53" r="8" fill="none" stroke="#8f959c" stroke-width="1.400"/><circle cx="39.200" cy="52.800" r="6.500" fill="#2c5ea8"/><path d="M32.700 52.800a6.500 6.500 0 0 1 13 0z" fill="#f59a1e"/><rect x="33" y="52.300" width="12.400" height="1.600" fill="#f2d23a"/><text x="39" y="71.300" text-anchor="middle" font-family="Liberation Sans,sans-serif" font-size="5" font-weight="bold" fill="#e89a20" letter-spacing=".5">2004</text></svg></div><div class="nm" style="width:120.2px"><svg class="a" style="left:0;top:0" width="19" height="19" viewBox="0 0 19 19"><g fill="#f55c5c"><rect x="6.100" y="3.200" width="6.300" height="8" rx="3.100"/><path d="M5.300 8.500h7.900c0 3-1.500 5-3.950 5.200S5.300 11.500 5.300 8.500z" opacity=".92"/><rect x="8.500" y="12.500" width="1.500" height="2.200"/><rect x="6.300" y="14.400" width="5.900" height="1.200" rx=".4"/></g><path d="M3.600 16.300 16.700 3.500" stroke="#2a2a2a" stroke-width="1.500"/><path d="M2.500 16 15.800 2.900" stroke="#f55c5c" stroke-width="1.300"/></svg><div class="t" style="left:21.5px;top:2.9px;font-size:13px;letter-spacing:0.25px;">Helmer Montejo</div></div></div>
<div class="tile" style="left:0px;top:298px"><div class="av" style="background:linear-gradient(90deg,#e6cfc0 0%,#efe6da 30%,#e6dccc 60%,#b08a58 82%,#7d6a3e 100%)"><div class="a" style="left:0px;top:0px;width:12px;height:44px;background:#e29a96;border-radius:2px;filter:blur(2px);"></div><div class="a" style="left:64px;top:10px;width:14px;height:30px;background:#d9b27a;border-radius:2px;filter:blur(2px);"></div><div class="a" style="left:10px;top:-2px;width:56px;height:78px;background:#15110f;border-radius:26px 26px 8px 8px;filter:blur(1.2px);"></div><div class="a" style="left:21px;top:2px;width:38px;height:48px;background:radial-gradient(ellipse at 50% 45%,#f6d4c2 0,#ecc2ad 100%);border-radius:50%;filter:blur(0.8px);"></div><div class="a" style="left:19px;top:-3px;width:42px;height:14px;background:#15110f;border-radius:20px 20px 2px 12px;filter:blur(1px);"></div><div class="a" style="left:28px;top:19px;width:7px;height:2.2px;background:#2a1a16;border-radius:50%;filter:blur(0.6px);"></div><div class="a" style="left:44px;top:19px;width:7px;height:2.2px;background:#2a1a16;border-radius:50%;filter:blur(0.6px);"></div><div class="a" style="left:32px;top:34px;width:15px;height:4px;background:#c8686a;border-radius:2px 2px 7px 7px;filter:blur(0.7px);"></div><div class="a" style="left:34px;top:34.5px;width:11px;height:2px;background:#fbf3f0;border-radius:1px 1px 4px 4px;filter:blur(0.5px);"></div><div class="a" style="left:4px;top:56px;width:70px;height:30px;background:#f7f3f0;border-radius:32px 32px 0 0 / 18px 18px 0 0;filter:blur(1px);"></div></div><div class="nm" style="width:121.7px"><svg class="a" style="left:0;top:0" width="19" height="19" viewBox="0 0 19 19"><g fill="#f55c5c"><rect x="6.100" y="3.200" width="6.300" height="8" rx="3.100"/><path d="M5.300 8.500h7.900c0 3-1.500 5-3.950 5.200S5.300 11.500 5.300 8.500z" opacity=".92"/><rect x="8.500" y="12.500" width="1.500" height="2.200"/><rect x="6.300" y="14.400" width="5.900" height="1.200" rx=".4"/></g><path d="M3.600 16.300 16.700 3.500" stroke="#2a2a2a" stroke-width="1.500"/><path d="M2.500 16 15.800 2.900" stroke="#f55c5c" stroke-width="1.300"/></svg><div class="t" style="left:21.5px;top:2.9px;font-size:13px;letter-spacing:0.15px;">Meschel Marcos</div></div></div>
<div class="tile" style="left:176px;top:298px"><div class="av" style="background:linear-gradient(135deg,#dba4bc 0%,#b98aa6 28%,#7f6880 52%,#c58a7c 78%,#e6b08a 100%)"><div class="a" style="left:0px;top:30px;width:30px;height:30px;background:#b9a6b8;border-radius:3px;filter:blur(3px);"></div><div class="a" style="left:60px;top:0px;width:18px;height:30px;background:#e6c0a0;border-radius:3px;filter:blur(3px);"></div><div class="a" style="left:26px;top:8px;width:40px;height:30px;background:#1c1716;border-radius:18px 18px 8px 8px;filter:blur(1px);"></div><div class="a" style="left:30px;top:17px;width:32px;height:38px;background:radial-gradient(ellipse at 50% 45%,#d3a58a 0,#c39378 100%);border-radius:50%;filter:blur(0.8px);"></div><div class="a" style="left:27px;top:6px;width:38px;height:15px;background:#1c1716;border-radius:18px 18px 3px 10px;filter:blur(1px);"></div><div class="a" style="left:36px;top:31px;width:6px;height:2px;background:#22161a;border-radius:50%;filter:blur(0.6px);"></div><div class="a" style="left:49px;top:31px;width:6px;height:2px;background:#22161a;border-radius:50%;filter:blur(0.6px);"></div><div class="a" style="left:41px;top:44px;width:10px;height:2.5px;background:#9a5a52;border-radius:3px;filter:blur(0.7px);"></div><div class="a" style="left:12px;top:50px;width:72px;height:36px;background:#222226;border-radius:30px 30px 0 0 / 20px 20px 0 0;filter:blur(1px);"></div><div class="a" style="left:35px;top:52px;width:20px;height:28px;background:#f0eeee;border-radius:4px;filter:blur(1px);clip-path:polygon(0 0,50% 40%,100% 0,100% 100%,0 100%);"></div><div class="a" style="left:0px;top:52px;width:20px;height:30px;background:#dcd8de;border-radius:3px;filter:blur(2px);"></div><div class="a" style="left:2px;top:64px;width:15px;height:10px;background:#3f8a4a;border-radius:2px;filter:blur(1.5px);"></div></div><div class="nm" style="width:138.6px"><svg class="a" style="left:0;top:0" width="19" height="19" viewBox="0 0 19 19"><g fill="#f55c5c"><rect x="6.100" y="3.200" width="6.300" height="8" rx="3.100"/><path d="M5.300 8.500h7.900c0 3-1.500 5-3.950 5.200S5.300 11.500 5.300 8.500z" opacity=".92"/><rect x="8.500" y="12.500" width="1.500" height="2.200"/><rect x="6.300" y="14.400" width="5.900" height="1.200" rx=".4"/></g><path d="M3.600 16.300 16.700 3.500" stroke="#2a2a2a" stroke-width="1.500"/><path d="M2.500 16 15.800 2.900" stroke="#f55c5c" stroke-width="1.300"/></svg><div class="t" style="left:21.5px;top:2.9px;font-size:13px;letter-spacing:0.08px;">Mark Paul Altarejos</div></div></div>
<div class="tile" style="left:0px;top:397px"><div class="av" style="background:radial-gradient(circle at 50% 40%,#606778 0%,#454b5b 55%,#323745 100%)"><div class="a" style="left:21px;top:7px;width:37px;height:64px;background:#14110f;border-radius:18px 18px 8px 8px;filter:blur(1.2px);"></div><div class="a" style="left:27px;top:13px;width:25px;height:31px;background:radial-gradient(ellipse at 50% 45%,#ebbda7 0,#dcab95 100%);border-radius:50%;filter:blur(0.8px);"></div><div class="a" style="left:25px;top:5px;width:30px;height:13px;background:#14110f;border-radius:14px 14px 3px 10px;filter:blur(1px);"></div><div class="a" style="left:32px;top:25px;width:5px;height:2px;background:#2a1a16;border-radius:50%;filter:blur(0.6px);"></div><div class="a" style="left:42px;top:25px;width:5px;height:2px;background:#2a1a16;border-radius:50%;filter:blur(0.6px);"></div><div class="a" style="left:34.5px;top:35px;width:10px;height:2.8px;background:#c25a5e;border-radius:1px 1px 5px 5px;filter:blur(0.7px);"></div><div class="a" style="left:36px;top:35.3px;width:7px;height:1.3px;background:#f6ece8;border-radius:1px 1px 3px 3px;filter:blur(0.5px);"></div><div class="a" style="left:6px;top:48px;width:66px;height:36px;background:#191a20;border-radius:30px 30px 0 0 / 18px 18px 0 0;filter:blur(1px);"></div><div class="a" style="left:33px;top:44px;width:13px;height:14px;background:#f0e9e4;border-radius:3px;filter:blur(0.8px);clip-path:polygon(0 0,50% 60%,100% 0,100% 100%,0 100%);"></div><div class="a" style="left:30px;top:46px;width:5px;height:28px;background:#e0492f;border-radius:2px;filter:blur(0.6px);transform:rotate(-8deg);"></div><div class="a" style="left:44px;top:46px;width:5px;height:28px;background:#e0492f;border-radius:2px;filter:blur(0.6px);transform:rotate(8deg);"></div><div class="a" style="left:35px;top:66px;width:9px;height:8px;background:#2a2a30;border-radius:2px;filter:blur(0.8px);"></div></div><div class="nm" style="width:172.0px"><svg class="a" style="left:0;top:0" width="19" height="19" viewBox="0 0 19 19"><g fill="#f55c5c"><rect x="6.100" y="3.200" width="6.300" height="8" rx="3.100"/><path d="M5.300 8.500h7.900c0 3-1.500 5-3.950 5.200S5.300 11.500 5.300 8.500z" opacity=".92"/><rect x="8.500" y="12.500" width="1.500" height="2.200"/><rect x="6.300" y="14.400" width="5.900" height="1.200" rx=".4"/></g><path d="M3.600 16.300 16.700 3.500" stroke="#2a2a2a" stroke-width="1.500"/><path d="M2.500 16 15.800 2.900" stroke="#f55c5c" stroke-width="1.300"/></svg><div class="t" style="left:21.5px;top:2.9px;font-size:13px;letter-spacing:-0.22px;">PSU_VladimirMarieCabu...</div></div></div>
<div class="tile" style="left:176px;top:397px"><div class="t" style="left:31.3px;top:41.2px;font-size:15.4px;letter-spacing:-0.38px;font-weight:bold;">Belinda Pajarillo</div><div class="nm" style="width:117.3px"><svg class="a" style="left:0;top:0" width="19" height="19" viewBox="0 0 19 19"><g fill="#f55c5c"><rect x="6.100" y="3.200" width="6.300" height="8" rx="3.100"/><path d="M5.300 8.500h7.900c0 3-1.500 5-3.950 5.200S5.300 11.500 5.300 8.500z" opacity=".92"/><rect x="8.500" y="12.500" width="1.500" height="2.200"/><rect x="6.300" y="14.400" width="5.900" height="1.200" rx=".4"/></g><path d="M3.600 16.300 16.700 3.500" stroke="#2a2a2a" stroke-width="1.500"/><path d="M2.500 16 15.800 2.900" stroke="#f55c5c" stroke-width="1.300"/></svg><div class="t" style="left:21.5px;top:2.9px;font-size:13px;letter-spacing:-0.05px;">Belinda Pajarillo</div></div></div>
<div class="tile" style="left:0px;top:496px"><div class="av" style="background:#fbfbfb"><div class="a" style="left:8px;top:14px;width:64px;height:41px;background:#c9cccd;border-radius:3px;filter:blur(0.4px);"></div><div class="a" style="left:11px;top:17px;width:58px;height:35px;background:#3c4a49;border-radius:2px;filter:blur(0.4px);"></div><div class="t" style="left:13px;top:20px;font-size:4px;color:#c8d4d2;letter-spacing:.2px">a+b=c</div><div class="t" style="left:52px;top:24px;font-size:3.500px;color:#c8d4d2">x&#178;+y</div><div class="a" style="left:25px;top:1px;width:32px;height:46px;background:#7a4426;border-radius:15px 15px 10px 10px;filter:blur(1px);"></div><div class="a" style="left:31px;top:9px;width:21px;height:25px;background:radial-gradient(ellipse at 50% 45%,#f7d2b6 0,#eec0a2 100%);border-radius:50%;filter:blur(0.6px);"></div><div class="a" style="left:28px;top:0px;width:27px;height:12px;background:#6e3c20;border-radius:13px 13px 3px 8px;filter:blur(0.8px);"></div><div class="a" style="left:35px;top:19px;width:4px;height:2px;background:#2a1a16;border-radius:50%;filter:blur(0.5px);"></div><div class="a" style="left:44px;top:19px;width:4px;height:2px;background:#2a1a16;border-radius:50%;filter:blur(0.5px);"></div><div class="a" style="left:37.5px;top:27px;width:8px;height:2.5px;background:#d6555c;border-radius:1px 1px 4px 4px;filter:blur(0.6px);"></div><div class="a" style="left:20px;top:36px;width:34px;height:24px;background:#a9cfe6;border-radius:10px;filter:blur(1px);"></div><div class="a" style="left:9px;top:30px;width:16px;height:4px;background:#a9cfe6;border-radius:2px;filter:blur(0.5px);transform:rotate(28deg);"></div><div class="a" style="left:8px;top:24px;width:2px;height:14px;background:#c9a06a;border-radius:1px;filter:blur(0.4px);transform:rotate(-30deg);"></div><div class="a" style="left:12px;top:56px;width:56px;height:8px;background:#8a5a34;border-radius:2px;filter:blur(0.6px);"></div><div class="a" style="left:16px;top:62px;width:8px;height:15px;background:#6f4424;border-radius:1px;filter:blur(0.5px);"></div><div class="a" style="left:54px;top:62px;width:8px;height:15px;background:#6f4424;border-radius:1px;filter:blur(0.5px);"></div><div class="a" style="left:47px;top:47px;width:19px;height:9px;background:#d6a92e;border-radius:2px;filter:blur(0.8px);"></div><div class="a" style="left:49px;top:50px;width:15px;height:3px;background:#3c8a5a;border-radius:1px;filter:blur(0.6px);"></div><div class="a" style="left:40px;top:51px;width:7px;height:7px;background:#c8282c;border-radius:50%;filter:blur(0.5px);"></div><div class="a" style="left:13px;top:50px;width:19px;height:7px;background:#e9e9f2;border-radius:2px;filter:blur(0.8px);"></div><div class="a" style="left:24px;top:46px;width:14px;height:10px;background:#5a4a42;border-radius:3px;filter:blur(1px);"></div></div><div class="nm" style="width:138.0px"><svg class="a" style="left:0;top:0" width="19" height="19" viewBox="0 0 19 19"><g fill="#f55c5c"><rect x="6.100" y="3.200" width="6.300" height="8" rx="3.100"/><path d="M5.300 8.500h7.900c0 3-1.500 5-3.950 5.200S5.300 11.500 5.300 8.500z" opacity=".92"/><rect x="8.500" y="12.500" width="1.500" height="2.200"/><rect x="6.300" y="14.400" width="5.900" height="1.200" rx=".4"/></g><path d="M3.600 16.300 16.700 3.500" stroke="#2a2a2a" stroke-width="1.500"/><path d="M2.500 16 15.800 2.900" stroke="#f55c5c" stroke-width="1.300"/></svg><div class="t" style="left:21.5px;top:2.9px;font-size:13px;letter-spacing:-0.03px;">Queenne Landingin</div></div></div>
<div class="tile" style="left:176px;top:496px"><div class="t" style="left:50.7px;top:41.4px;font-size:15.1px;letter-spacing:-0.39px;font-weight:bold;">Ersyl Biray</div><div class="nm" style="width:84.7px"><svg class="a" style="left:0;top:0" width="19" height="19" viewBox="0 0 19 19"><g fill="#f55c5c"><rect x="6.100" y="3.200" width="6.300" height="8" rx="3.100"/><path d="M5.300 8.500h7.900c0 3-1.500 5-3.950 5.200S5.300 11.500 5.300 8.500z" opacity=".92"/><rect x="8.500" y="12.500" width="1.500" height="2.200"/><rect x="6.300" y="14.400" width="5.900" height="1.200" rx=".4"/></g><path d="M3.600 16.300 16.700 3.500" stroke="#2a2a2a" stroke-width="1.500"/><path d="M2.500 16 15.800 2.900" stroke="#f55c5c" stroke-width="1.300"/></svg><div class="t" style="left:21.5px;top:2.9px;font-size:13px;letter-spacing:-0.22px;">Ersyl Biray</div></div></div>
<div class="tile" style="left:0px;top:595px"><div class="t" style="left:45.6px;top:41.7px;font-size:14.8px;letter-spacing:-0.38px;font-weight:bold;">Researchers</div><div class="nm" style="width:96.4px"><svg class="a" style="left:0;top:0" width="19" height="19" viewBox="0 0 19 19"><g fill="#f55c5c"><rect x="6.100" y="3.200" width="6.300" height="8" rx="3.100"/><path d="M5.300 8.500h7.900c0 3-1.500 5-3.950 5.200S5.300 11.500 5.300 8.500z" opacity=".92"/><rect x="8.500" y="12.500" width="1.500" height="2.200"/><rect x="6.300" y="14.400" width="5.900" height="1.200" rx=".4"/></g><path d="M3.600 16.300 16.700 3.500" stroke="#2a2a2a" stroke-width="1.500"/><path d="M2.500 16 15.800 2.900" stroke="#f55c5c" stroke-width="1.300"/></svg><div class="t" style="left:21.5px;top:2.9px;font-size:13px;letter-spacing:-0.21px;">Researchers</div></div></div>
<div class="tile" style="left:176px;top:595px"><div class="t" style="left:24.1px;top:41.1px;font-size:15.5px;letter-spacing:0.12px;font-weight:bold;">Ms. Kathleen M...</div><div class="nm" style="width:172.0px"><svg class="a" style="left:0;top:0" width="19" height="19" viewBox="0 0 19 19"><g fill="#f55c5c"><rect x="6.100" y="3.200" width="6.300" height="8" rx="3.100"/><path d="M5.300 8.500h7.900c0 3-1.500 5-3.950 5.200S5.300 11.500 5.300 8.500z" opacity=".92"/><rect x="8.500" y="12.500" width="1.500" height="2.200"/><rect x="6.300" y="14.400" width="5.900" height="1.200" rx=".4"/></g><path d="M3.600 16.300 16.700 3.500" stroke="#2a2a2a" stroke-width="1.500"/><path d="M2.500 16 15.800 2.900" stroke="#f55c5c" stroke-width="1.300"/></svg><div class="t" style="left:21.5px;top:2.9px;font-size:13px;letter-spacing:-0.16px;">Ms. Kathleen Mae S. Ca...</div></div></div>
<div class="tile" style="left:0px;top:694px"><div class="t" style="left:22.8px;top:41.1px;font-size:15.5px;letter-spacing:0.01px;font-weight:bold;">Michael Jere Ab...</div><div class="nm" style="width:132.6px"><svg class="a" style="left:0;top:0" width="19" height="19" viewBox="0 0 19 19"><g fill="#f55c5c"><rect x="6.100" y="3.200" width="6.300" height="8" rx="3.100"/><path d="M5.300 8.500h7.900c0 3-1.500 5-3.950 5.200S5.300 11.500 5.300 8.500z" opacity=".92"/><rect x="8.500" y="12.500" width="1.500" height="2.200"/><rect x="6.300" y="14.400" width="5.900" height="1.200" rx=".4"/></g><path d="M3.600 16.300 16.700 3.500" stroke="#2a2a2a" stroke-width="1.500"/><path d="M2.500 16 15.800 2.900" stroke="#f55c5c" stroke-width="1.300"/></svg><div class="t" style="left:21.5px;top:2.9px;font-size:13px;letter-spacing:0.12px;">Michael Jere Abiol</div></div></div>
<div class="tile" style="left:176px;top:694px"><div class="t" style="left:48.6px;top:41.1px;font-size:15.5px;letter-spacing:-0.22px;font-weight:bold;">Jay Tomon</div><div class="nm" style="width:87.6px"><svg class="a" style="left:0;top:0" width="19" height="19" viewBox="0 0 19 19"><g fill="#f55c5c"><rect x="6.100" y="3.200" width="6.300" height="8" rx="3.100"/><path d="M5.300 8.500h7.900c0 3-1.500 5-3.950 5.200S5.300 11.500 5.300 8.500z" opacity=".92"/><rect x="8.500" y="12.500" width="1.500" height="2.200"/><rect x="6.300" y="14.400" width="5.900" height="1.200" rx=".4"/></g><path d="M3.600 16.300 16.700 3.500" stroke="#2a2a2a" stroke-width="1.500"/><path d="M2.500 16 15.800 2.900" stroke="#f55c5c" stroke-width="1.300"/></svg><div class="t" style="left:21.5px;top:2.9px;font-size:13px;">Jay Tomon</div></div></div>
<div class="tile" style="left:0px;top:793px"><div class="t" style="left:43.4px;top:41.2px;font-size:15.4px;letter-spacing:-0.40px;font-weight:bold;">Rosel Dionio</div><div class="nm" style="width:99.2px"><svg class="a" style="left:0;top:0" width="19" height="19" viewBox="0 0 19 19"><g fill="#f55c5c"><rect x="6.100" y="3.200" width="6.300" height="8" rx="3.100"/><path d="M5.300 8.500h7.900c0 3-1.500 5-3.950 5.200S5.300 11.500 5.300 8.500z" opacity=".92"/><rect x="8.500" y="12.500" width="1.500" height="2.200"/><rect x="6.300" y="14.400" width="5.900" height="1.200" rx=".4"/></g><path d="M3.600 16.300 16.700 3.500" stroke="#2a2a2a" stroke-width="1.500"/><path d="M2.500 16 15.800 2.900" stroke="#f55c5c" stroke-width="1.300"/></svg><div class="t" style="left:21.5px;top:2.9px;font-size:13px;letter-spacing:0.04px;">Rosel Dionio</div></div></div>
<div class="tile" style="left:176px;top:793px"><div class="t" style="left:53.2px;top:41.3px;font-size:15.2px;letter-spacing:-0.39px;font-weight:bold;">Jay Fallan</div><div class="nm" style="width:80.5px"><svg class="a" style="left:0;top:0" width="19" height="19" viewBox="0 0 19 19"><g fill="#f55c5c"><rect x="6.100" y="3.200" width="6.300" height="8" rx="3.100"/><path d="M5.300 8.500h7.900c0 3-1.500 5-3.950 5.200S5.300 11.500 5.300 8.500z" opacity=".92"/><rect x="8.500" y="12.500" width="1.500" height="2.200"/><rect x="6.300" y="14.400" width="5.900" height="1.200" rx=".4"/></g><path d="M3.600 16.300 16.700 3.500" stroke="#2a2a2a" stroke-width="1.500"/><path d="M2.500 16 15.800 2.900" stroke="#f55c5c" stroke-width="1.300"/></svg><div class="t" style="left:21.5px;top:2.9px;font-size:13px;letter-spacing:-0.38px;">Jay Fallan</div></div></div>
</div>
<div class="a" style="left:1694px;top:984px;width:74px;height:34px;background:#121213;border-radius:0 0 3px 3px;"></div>
<svg class="a" style="left:1724px;top:996px;" width="14" height="9" viewBox="0 0 14 9"><path d="M1 1l6 6.500L13 1" fill="none" stroke="#8d8ba0" stroke-width="1.700"/></svg>
<div class="a" style="left:1533.5px;top:553px;width:1.5px;height:26px;background:#c4c4c4;"></div>
<div class="a" style="left:1536.7px;top:553px;width:1.5px;height:26px;background:#c4c4c4;"></div>
<div id="botbar">
<svg class="a" style="left:40px;top:9px;" width="24" height="26" viewBox="0 0 24 26"><g stroke="#fff" fill="none" stroke-width="1.500"><rect x="8.300" y="1" width="7.400" height="14" rx="3.700"/><path d="M4.800 11.500c0 4.200 3 7 7.200 7s7.200-2.800 7.200-7M12 18.500v5.200M7.800 24h8.400"/></g><path d="M.8 23.800 23.200.6" stroke="#000" stroke-width="5"/><path d="M.8 23.800 23.200.6" stroke="#ff1f5b" stroke-width="2.300" stroke-linecap="round"/></svg>
<div class="t" style="left:36.3px;top:39.4px;font-size:12.8px;letter-spacing:-0.21px;color:#d2d2d2;-webkit-text-stroke:.2px #d2d2d2;">Audio</div>
<svg class="a" style="left:80px;top:20px;" width="8" height="5" viewBox="0 0 8 5"><path d="M.6 4.400 4 1l3.400 3.400" fill="none" stroke="#c4c4c4" stroke-width="1.300"/></svg>
<svg class="a" style="left:132px;top:9px;" width="26" height="26" viewBox="0 0 26 26"><g stroke="#fff" fill="none" stroke-width="1.500" stroke-linejoin="round"><rect x="1.300" y="7" width="16" height="12.600" rx="2.600"/><path d="M17.300 11.800 24.200 8v10.600l-6.900-3.800z"/></g><path d="M2 24 24.500.8" stroke="#000" stroke-width="5"/><path d="M2 24 24.500.8" stroke="#ff1f5b" stroke-width="2.300" stroke-linecap="round"/></svg>
<div class="t" style="left:129.7px;top:39.4px;font-size:12.7px;letter-spacing:-0.39px;color:#d2d2d2;-webkit-text-stroke:.2px #d2d2d2;">Video</div>
<svg class="a" style="left:178px;top:20px;" width="8" height="5" viewBox="0 0 8 5"><path d="M.6 4.400 4 1l3.400 3.400" fill="none" stroke="#c4c4c4" stroke-width="1.300"/></svg>
<svg class="a" style="left:737px;top:13.5px;" width="18" height="18" viewBox="0 0 18 18"><g stroke="#fff" fill="none" stroke-width="1.600"><circle cx="5.500" cy="3.300" r="2.500"/><circle cx="13" cy="6.800" r="2.300"/><path d="M.8 14.600c0-3.200 2-5 4.700-5 1.300 0 2.300.4 3.100 1.100M.8 14.600c0 1.700.8 2.600 2.400 2.600h3"/><rect x="8.300" y="11.600" width="9" height="5.600" rx="2.800"/></g></svg>
<div class="t" style="left:762.5px;top:13.6px;font-size:12px;letter-spacing:0.23px;color:#e0e0e0;">20</div>
<div class="t" style="left:715.3px;top:39.4px;font-size:12.7px;letter-spacing:-0.39px;color:#d2d2d2;-webkit-text-stroke:.2px #d2d2d2;">Participants</div>
<svg class="a" style="left:844px;top:11px;" width="23" height="22" viewBox="0 0 23 22"><g stroke="#fff" fill="none" stroke-width="1.500" stroke-linejoin="round"><path d="M7 5.200V4.600C7 2.600 8.600 1 10.600 1h7.600c2 0 3.600 1.600 3.600 3.600v5.200c0 2-1.300 3.300-3 3.500"/><path d="M4.600 6.600h8.800c2 0 3.600 1.600 3.600 3.600v4.400c0 2-1.600 3.600-3.600 3.600H10l-3.800 3v-3H4.600c-2 0-3.600-1.600-3.600-3.600v-4.400c0-2 1.600-3.600 3.600-3.600z"/></g><circle cx="5.600" cy="12.500" r="1" fill="#fff"/><circle cx="9" cy="12.500" r="1" fill="#fff"/><circle cx="12.400" cy="12.500" r="1" fill="#fff"/></svg>
<div class="t" style="left:844.0px;top:40.0px;font-size:12.1px;letter-spacing:-0.39px;color:#d2d2d2;-webkit-text-stroke:.2px #d2d2d2;">Chat</div>
<svg class="a" style="left:885px;top:20px;" width="8" height="5" viewBox="0 0 8 5"><path d="M.6 4.400 4 1l3.400 3.400" fill="none" stroke="#c4c4c4" stroke-width="1.300"/></svg>
<svg class="a" style="left:929px;top:12px;" width="24" height="21" viewBox="0 0 24 21"><path d="M12 19.800C5 15.200 1 11.200 1 6.600 1 3.300 3.400 1 6.400 1 8.800 1 10.800 2.300 12 4.300 13.200 2.300 15.200 1 17.600 1 20.600 1 23 3.300 23 6.600c0 4.600-4 8.600-11 13.200z" stroke="#fff" fill="none" stroke-width="1.500" stroke-linejoin="round" transform="rotate(-13 12 10)"/></svg>
<div class="t" style="left:926.3px;top:40.3px;font-size:11.7px;letter-spacing:-0.37px;color:#d2d2d2;-webkit-text-stroke:.2px #d2d2d2;">React</div>
<svg class="a" style="left:965px;top:20px;" width="8" height="5" viewBox="0 0 8 5"><path d="M.6 4.400 4 1l3.400 3.400" fill="none" stroke="#c4c4c4" stroke-width="1.300"/></svg>
<div class="a" style="left:1017.5px;top:12px;width:24.5px;height:20px;background:#0bf08c;border-radius:4px;"></div>
<svg class="a" style="left:1024px;top:15.5px;" width="12" height="13" viewBox="0 0 12 13"><path d="M6 12.500V2.200M1.400 6.400 6 1.800l4.600 4.600" fill="none" stroke="#000" stroke-width="2.300"/></svg>
<div class="t" style="left:1015.0px;top:40.0px;font-size:12.0px;letter-spacing:-0.40px;color:#d2d2d2;-webkit-text-stroke:.2px #d2d2d2;">Share</div>
<svg class="a" style="left:1108px;top:11px;" width="22" height="22" viewBox="0 0 22 22"><g stroke="#fff" fill="none" stroke-width="1.600"><circle cx="17" cy="5" r="3.600"/><circle cx="5" cy="17" r="3.600"/><path d="M10.500 1.200H5.800C3.200 1.200 1.200 3.200 1.200 5.800v4.400M11.500 20.800h4.700c2.600 0 4.600-2 4.600-4.600v-4.400"/></g></svg>
<div class="t" style="left:1105.0px;top:39.6px;font-size:12.5px;letter-spacing:-0.37px;color:#d2d2d2;-webkit-text-stroke:.2px #d2d2d2;">Apps</div>
<svg class="a" style="left:1197px;top:10px;" width="24" height="24" viewBox="0 0 24 24"><g fill="#fff"><rect x="0" y="0" width="11" height="11" rx="1"/><rect x="13" y="0" width="11" height="11" rx="1"/><rect x="0" y="13" width="11" height="11" rx="1"/><rect x="13" y="13" width="11" height="11" rx="1"/></g></svg>
<div class="t" style="left:1167.0px;top:39.4px;font-size:12.7px;letter-spacing:-0.40px;color:#d2d2d2;-webkit-text-stroke:.2px #d2d2d2;">Breakout rooms</div>
<svg class="a" style="left:1289px;top:10px;" width="24" height="24" viewBox="0 0 24 24"><circle cx="12" cy="12" r="11" stroke="#fff" fill="none" stroke-width="1.500"/><circle cx="6.600" cy="12" r="1.300" fill="#fff"/><circle cx="12" cy="12" r="1.300" fill="#fff"/><circle cx="17.400" cy="12" r="1.300" fill="#fff"/></svg>
<div class="t" style="left:1287.0px;top:39.4px;font-size:12.8px;letter-spacing:-0.29px;color:#d2d2d2;-webkit-text-stroke:.2px #d2d2d2;">More</div>
<svg class="a" style="left:1861px;top:10px;" width="24" height="24" viewBox="0 0 24 24"><path d="M8.500 .8H22l.5 19-6.200 3.400V3.500l5-2.200" fill="none" stroke="#ff1f5b" stroke-width="1.500" stroke-linejoin="round"/><g stroke="#fff" fill="none" stroke-width="1.400" stroke-linejoin="round" stroke-linecap="round"><circle cx="8" cy="6.200" r="2.600"/><path d="M6 10c-1.600.6-3.400 2.200-4.600 4.200l1.800 1 2.200-2.200-.6 4-3 5.400 2 1 3.200-5 2.200 1.400.6 4h2.200l-.4-5.200-2.400-2.600.6-3 1.600 2 2.600.6.400-1.800-2-.8-2-3.200c-.6-1-1.800-1.600-3-1.200z"/></g></svg>
<div class="t" style="left:1842.0px;top:39.8px;font-size:12.3px;letter-spacing:-0.42px;color:#d2d2d2;-webkit-text-stroke:.2px #d2d2d2;">Leave room</div>
</div>
</body>
</html>
